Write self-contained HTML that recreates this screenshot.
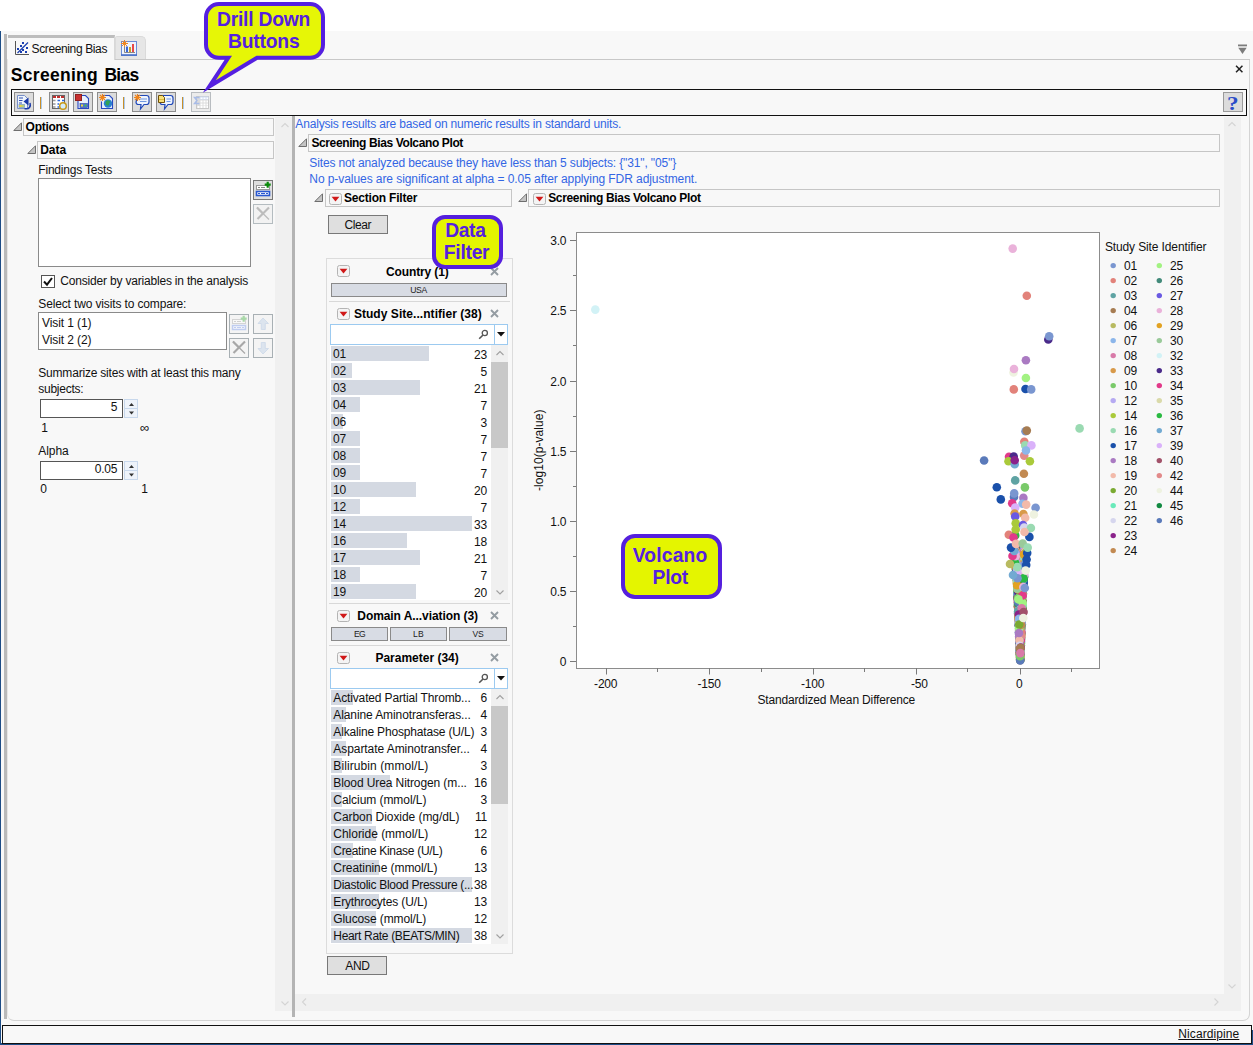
<!DOCTYPE html>
<html><head><meta charset="utf-8"><title>Screening Bias</title>
<style>
*{box-sizing:border-box;margin:0;padding:0}
html,body{width:1253px;height:1045px;overflow:hidden;background:#fff}
body{position:relative;font-family:"Liberation Sans",sans-serif;font-size:12px;color:#111}
.a{position:absolute}
.t{position:absolute;white-space:nowrap;line-height:1}
.hdr{position:absolute;border:1px solid #c6c6c6;background:#f8f8f8}
.btn{position:absolute;background:#dfdfdf;border:1px solid #787878}
.tb{position:absolute;top:92px;width:20px;height:20px;background:#dcdcdc;border:1px solid #8c8c8c}
.sep{position:absolute;top:97px;width:2px;height:12px;background:#c98f2a;border-right:1px solid #a8caf0}
.bar{position:absolute;left:331px;height:15px;background:#d4d9e2}
.call{position:absolute;background:#e4f500;border:4px solid #5520dd;border-radius:14px}
.sq{position:absolute;background:#d8dce4;border:1px solid #8a8a8a}
svg{position:absolute;overflow:visible}
</style></head>
<body>
<div class="a" style="left:0px;top:31px;width:1253px;height:1014px;background:#f8f8f8"></div>
<div class="a" style="left:0px;top:31px;width:1px;height:1014px;background:#1c4c86"></div>
<div class="a" style="left:0px;top:1043px;width:1253px;height:2px;background:#1c4c86"></div>
<div class="a" style="left:1251px;top:1030px;width:2px;height:15px;background:#1c4c86"></div>
<div class="a" style="left:4px;top:34px;width:3px;height:985px;background:#b9b9b9"></div>
<div class="a" style="left:7px;top:59px;width:1243px;height:962px;border:1px solid #d4d4d4;border-top:none;border-left:1px solid #e6e6e6;border-radius:0 0 7px 7px"></div>
<div class="a" style="left:113px;top:59px;width:1137px;height:1px;background:#c8c8c8"></div>
<div class="a" style="left:8px;top:35px;width:107px;height:25px;border-top:3px solid #bdbdbd;border-right:1px solid #d8d8d8;background:#f8f8f8"></div>
<div class="a" style="left:115px;top:36px;width:31px;height:23px;background:#e6e6e6;border-radius:2px 5px 0 0;border:1px solid #dadada;border-bottom:none"></div>
<svg style="left:15px;top:41px" width="15" height="15" viewBox="0 0 15 15">
<path d="M0.5 0v13.5H14" fill="none" stroke="#555" stroke-width="1"/>
<path d="M2.5 12L13 1.5" stroke="#1a3fb0" stroke-width="1.2"/>
<g fill="#1a3fb0"><rect x="7" y="1" width="2" height="2"/><rect x="5" y="4" width="2" height="2"/><rect x="2" y="7" width="2" height="2"/><rect x="7" y="8" width="2" height="2"/><rect x="11" y="6" width="2" height="2"/><rect x="5" y="10" width="2" height="2"/><rect x="10" y="10" width="2" height="2"/></g></svg>
<div class="t" style="left:31.5px;top:42.7px;font-size:12px;letter-spacing:-0.37px;">Screening Bias</div>
<svg style="left:121px;top:40px" width="16" height="16" viewBox="0 0 16 16">
<rect x="0.500" y="1.500" width="15" height="14" fill="#eef3fc" stroke="#6a8cd8"/><path d="M0 15h16" stroke="#4a70c8" stroke-width="1.600"/>
<path d="M3.500 7v5.500H14" fill="none" stroke="#888" stroke-width="1"/>
<rect x="5" y="6.500" width="2" height="5.500" fill="#3a68d8"/><rect x="8" y="7" width="2" height="5" fill="#c8a028"/><rect x="11" y="4" width="2" height="8" fill="#e84848"/>
<path d="M3.500 0v7M0 3.500h7M1 1l5 5M6 1L1 6" stroke="#f08820" stroke-width="1"/></svg>
<svg style="left:1237.500px;top:43.500px" width="9" height="10" viewBox="0 0 9 10"><path d="M0 0.500h9v1.800H0z" fill="#7c7c7c"/><path d="M0.300 3.800h8.400L4.500 10z" fill="#7c7c7c"/></svg>
<div class="t" style="left:10.8px;top:67.0px;font-size:17.5px;font-weight:bold;color:#000;letter-spacing:0.29px;">Screening</div>
<div class="t" style="left:104.4px;top:67.0px;font-size:17.5px;font-weight:bold;color:#000;letter-spacing:-0.69px;">Bias</div>
<svg style="left:1234.600px;top:65.400px" width="8.500" height="8" viewBox="0 0 10 10"><path d="M1 1l8 8M9 1l-8 8" stroke="#222" stroke-width="1.900"/></svg>
<div class="a" style="left:11px;top:89px;width:1236px;height:27px;border:1.5px solid #111;background:#f8f8f8"></div>
<div class="tb" style="left:14px;top:92px;width:20px;height:20px;"></div>
<div class="tb" style="left:49px;top:92px;width:20px;height:20px;"></div>
<div class="tb" style="left:73px;top:92px;width:20px;height:20px;"></div>
<div class="tb" style="left:97px;top:92px;width:20px;height:20px;"></div>
<div class="tb" style="left:132px;top:92px;width:20px;height:20px;"></div>
<div class="tb" style="left:156px;top:92px;width:20px;height:20px;"></div>
<div class="tb" style="left:191px;top:92px;width:20px;height:20px;background:#ececec;border-color:#b8bcc0"></div>
<div class="sep" style="left:40px;top:97px;width:2px;height:12px;"></div>
<div class="sep" style="left:123px;top:97px;width:2px;height:12px;"></div>
<div class="sep" style="left:182px;top:97px;width:2px;height:12px;"></div>
<div class="a" style="left:1223px;top:92px;width:20px;height:20px;background:#dcdcdc;border:1px solid #9a9a9a"></div>
<div class="t" style="left:1227.3px;top:93.5px;font-size:19px;font-weight:bold;color:#2a4cc8;font-family:'Liberation Serif',serif;transform:scaleX(1.22);transform-origin:0 0;">?</div>
<svg style="left:14px;top:92px" width="20" height="20" viewBox="0 0 20 20"><path d="M3.500 3.500h7l3 3v10h-10z" fill="#eef4fc" stroke="#7890c8"/><path d="M5 6h4M5 8.500h3.500M5 11h3" stroke="#3050b0" stroke-width="1.100"/><rect x="5" y="12.500" width="5.500" height="3" fill="#b8d070" stroke="#7a9ac8" stroke-width=".7"/><rect x="5.500" y="13" width="2" height="2" fill="#f0d040"/><path d="M10.500 16.500c5 1 6.500-2 5.500-5.500" fill="none" stroke="#1838a8" stroke-width="1.500"/><path d="M9.500 9.500l5-4v8z" fill="#1838a8"/></svg>
<svg style="left:49px;top:92px" width="20" height="20" viewBox="0 0 20 20"><rect x="3.500" y="3.500" width="12" height="13" fill="#fff" stroke="#666"/><path d="M4 5h3M8 5h3M12 5h3" stroke="#c03030" stroke-width="2.200"/><path d="M4 8.500h2.500M4 12h2.500M4 15h2.500" stroke="#999" stroke-width="1.600"/><path d="M8.500 8.500h2.500M13 8.500h2M8.500 12h1.500M8.500 15h1.500" stroke="#2868e0" stroke-width="1.300"/><circle cx="14" cy="14" r="3.300" fill="#d4ecfa" stroke="#c89818" stroke-width="1.500"/></svg>
<svg style="left:73px;top:92px" width="20" height="20" viewBox="0 0 20 20"><path d="M6.500 3.500h6l3 3v10h-10.500v-8" fill="#e8f0fc" stroke="#2848c0" stroke-width="1.100"/><rect x="2.500" y="2.500" width="6" height="6" fill="#c83030" stroke="#902020"/><rect x="7" y="11.500" width="7.500" height="4" fill="#4a70d8" stroke="#2848a8" stroke-width=".6"/><rect x="8" y="12.500" width="2" height="2" fill="#f0d838"/><rect x="11.500" y="12.500" width="2" height="2" fill="#48c048"/></svg>
<svg style="left:97px;top:92px" width="20" height="20" viewBox="0 0 20 20"><path d="M5.500 3.500h7l3 3v10h-11v-7" fill="#e8f0fc" stroke="#2848c0" stroke-width="1.100"/><circle cx="11" cy="11.500" r="4.200" fill="#2a80d0"/><path d="M8.500 10c1-2.500 3.500-2 4.500-1s-1 2-1 3.500-2.500 1.500-3.500-.5z" fill="#30a058"/><path d="M5.500 2v7M2 5.500h7M3 3l5 5M8 3L3 8" stroke="#f08418" stroke-width="1.100"/></svg>
<svg style="left:132px;top:92px" width="20" height="20" viewBox="0 0 20 20"><path d="M6 3.500h8.500a2.500 2.500 0 0 1 2.500 2.500v4a2.500 2.500 0 0 1-2.500 2.500H12L8.500 17l.5-4.500H6.500a2.500 2.500 0 0 1-2.500-2.500z" fill="#eef4fe" stroke="#2048b8" stroke-width="1.200"/><path d="M8 7h7M8 9.500h6.500" stroke="#7098e0" stroke-width="1.200"/><path d="M5.500 2v7M2 5.500h7M3 3l5 5M8 3L3 8" stroke="#f08418" stroke-width="1.100"/></svg>
<svg style="left:156px;top:92px" width="20" height="20" viewBox="0 0 20 20"><path d="M6 3.500h8.500a2.500 2.500 0 0 1 2.500 2.500v4a2.500 2.500 0 0 1-2.500 2.500H12L8.500 17l.5-4.500H6.500a2.500 2.500 0 0 1-2.500-2.500z" fill="#eef4fe" stroke="#2048b8" stroke-width="1.200"/><path d="M10.500 7h4.500M10.500 9.500h4" stroke="#7098e0" stroke-width="1.200"/><path d="M2.500 3.500h4l2 2v5h-6z" fill="#f8e078" stroke="#705008"/><path d="M3 7.500h5" stroke="#d8b030" stroke-width=".8"/></svg>
<svg style="left:191px;top:92px" width="20" height="20" viewBox="0 0 20 20"><rect x="5.500" y="4.500" width="12" height="12" fill="#dcdcdc" stroke="#c8c8c8"/><path d="M8.500 4.500h9v3h-9z" fill="#d0dcf4"/><g fill="#fff"><rect x="9.500" y="5.500" width="2" height="1.500"/><rect x="12.500" y="5.500" width="2" height="1.500"/><rect x="15.500" y="5.500" width="1.500" height="1.500"/><rect x="9.500" y="8.500" width="2" height="2"/><rect x="12.500" y="8.500" width="2" height="2"/><rect x="15.500" y="8.500" width="1.500" height="2"/><rect x="9.500" y="11.500" width="2" height="2"/><rect x="12.500" y="11.500" width="2" height="2"/><rect x="15.500" y="11.500" width="1.500" height="2"/><rect x="6.500" y="14" width="2" height="2"/><rect x="9.500" y="14" width="2" height="2"/><rect x="12.500" y="14" width="2" height="2"/><rect x="15.500" y="14" width="1.500" height="2"/></g><path d="M8.500 5.500H3.500l2.500 3-2.500 3h5" fill="none" stroke="#a8bce8" stroke-width="1.400"/></svg>
<svg style="left:0;top:0" width="340" height="100" viewBox="0 0 340 100">
<path d="M219 4H310a13 13 0 0 1 13 13V44.800a13 13 0 0 1-13 13H257L209.350 86.470 228.300 57.800H219a13 13 0 0 1-13-13V17a13 13 0 0 1 13-13z" fill="#e6f606" stroke="#5520e0" stroke-width="4" stroke-linejoin="miter" stroke-miterlimit="12"/></svg>
<div class="t" style="left:217.0px;top:10.2px;font-size:19.3px;font-weight:bold;color:#5520e0;letter-spacing:-0.23px;">Drill Down</div>
<div class="t" style="left:228.0px;top:32.3px;font-size:19.3px;font-weight:bold;color:#5520e0;letter-spacing:-0.19px;">Buttons</div>
<div class="a" style="left:275px;top:117px;width:17px;height:894px;background:#f0f0f0"></div>
<div class="a" style="left:292px;top:116px;width:3px;height:901px;background:#b4b4b4"></div>
<svg style="left:280.5px;top:121.5px" width="8" height="8" viewBox="0 0 8 8"><path d="M0.500 5L4 1.500 7.500 5" fill="none" stroke="#d4d4d4" stroke-width="1.1"/></svg>
<svg style="left:280.5px;top:999.5px" width="8" height="8" viewBox="0 0 8 8"><path d="M0.500 1.500L4 5 7.500 1.500" fill="none" stroke="#d4d4d4" stroke-width="1.1"/></svg>
<svg style="left:13px;top:122px" width="9" height="9" viewBox="0 0 9 9"><path d="M8.500 0.800V8.500H0.800z" fill="#c4c4c4" stroke="#6e6e6e" stroke-width="1"/></svg>
<div class="hdr" style="left:23px;top:118px;width:251px;height:18px;"></div>
<div class="t" style="left:25.6px;top:120.9px;font-size:12px;font-weight:bold;color:#000;letter-spacing:-0.28px;">Options</div>
<svg style="left:27px;top:145px" width="9" height="9" viewBox="0 0 9 9"><path d="M8.500 0.800V8.500H0.800z" fill="#c4c4c4" stroke="#6e6e6e" stroke-width="1"/></svg>
<div class="hdr" style="left:37px;top:141px;width:237px;height:18px;"></div>
<div class="t" style="left:40.2px;top:143.9px;font-size:12px;font-weight:bold;color:#000;">Data</div>
<div class="t" style="left:38.3px;top:164.1px;font-size:12px;letter-spacing:-0.20px;">Findings Tests</div>
<div class="a" style="left:38px;top:178px;width:213px;height:89px;background:#fff;border:1px solid #8a8a8a"></div>
<div class="btn" style="left:253px;top:180px;width:20px;height:20px;"></div>
<svg style="left:253px;top:180px" width="20" height="20" viewBox="0 0 20 20"><rect x="3.500" y="5.500" width="13" height="4" fill="#fff" stroke="#9a9a9a"/><path d="M5 7.500h2M8 7.500h4" stroke="#888" stroke-width="1"/><rect x="3.500" y="11.500" width="13" height="4" fill="#fff" stroke="#2a58d0" stroke-width="1.600"/><path d="M5 13.500h2M8 13.500h4M13 13.500h2" stroke="#2a58d0" stroke-width="1"/><path d="M14.700 1.700v6M11.700 4.700h6" stroke="#0a8a0a" stroke-width="2.200"/></svg>
<div class="a" style="left:253px;top:204px;width:20px;height:20px;background:#f2f2f2;border:1px solid #b4bcc0"></div>
<svg style="left:253px;top:204px" width="20" height="20" viewBox="0 0 20 20"><path d="M4 3.500L16 15.500" stroke="#bcbcbc" stroke-width="1.200"/><path d="M4.500 15L16 3.500" stroke="#bcbcbc" stroke-width="2.200"/><path d="M4 3.500l6 6" stroke="#bcbcbc" stroke-width="2.200"/></svg>
<div class="a" style="left:41px;top:275px;width:14px;height:13px;background:#fff;border:1px solid #555"></div>
<svg style="left:43px;top:277px" width="10" height="10" viewBox="0 0 10 10"><path d="M1 4.500l3 3.200L9 1" fill="none" stroke="#111" stroke-width="2"/></svg>
<div class="t" style="left:60.3px;top:275.2px;font-size:12px;letter-spacing:-0.19px;">Consider by variables in the analysis</div>
<div class="t" style="left:38.3px;top:297.9px;font-size:12px;letter-spacing:-0.14px;">Select two visits to compare:</div>
<div class="a" style="left:38px;top:312px;width:189px;height:38px;background:#fff;border:1px solid #8a8a8a"></div>
<div class="t" style="left:42.1px;top:317.1px;font-size:12px;letter-spacing:-0.10px;">Visit 1 (1)</div>
<div class="t" style="left:42.1px;top:334.1px;font-size:12px;letter-spacing:-0.10px;">Visit 2 (2)</div>
<div class="a" style="left:229px;top:314px;width:20px;height:20px;background:#f4f4f4;border:1px solid #a8b0b4"></div>
<div class="a" style="left:253px;top:314px;width:20px;height:20px;background:#f4f4f4;border:1px solid #a8b0b4"></div>
<div class="a" style="left:229px;top:338px;width:20px;height:20px;background:#f4f4f4;border:1px solid #a8b0b4"></div>
<div class="a" style="left:253px;top:338px;width:20px;height:20px;background:#f4f4f4;border:1px solid #a8b0b4"></div>
<svg style="left:229px;top:314px" width="20" height="20" viewBox="0 0 20 20"><rect x="3.500" y="5.500" width="13" height="4" fill="#f8f8f8" stroke="#d4d4d4"/><path d="M5 7.500h2M8 7.500h4" stroke="#d0d0d0" stroke-width="1"/><rect x="3.500" y="11.500" width="13" height="4" fill="#f4f6fc" stroke="#c0cdf0" stroke-width="1.500"/><path d="M5 13.500h2M8 13.500h4M13 13.500h2" stroke="#c0cdf0" stroke-width="1"/><path d="M14.700 1.700v6M11.700 4.700h6" stroke="#a8d8a8" stroke-width="2.200"/></svg>
<svg style="left:253px;top:314px" width="20" height="20" viewBox="0 0 20 20"><path d="M10 4L5 9.500h3.300v6h4v-6h3.200z" fill="#dce4ee" stroke="#ccd8e8" stroke-width=".8"/></svg>
<svg style="left:229px;top:338px" width="20" height="20" viewBox="0 0 20 20"><path d="M4 3.500L16 15.500" stroke="#a8a8a8" stroke-width="1.200"/><path d="M4.500 15L16 3.500" stroke="#a8a8a8" stroke-width="2.200"/><path d="M4 3.500l6 6" stroke="#a8a8a8" stroke-width="2.200"/></svg>
<svg style="left:253px;top:338px" width="20" height="20" viewBox="0 0 20 20"><path d="M10 16L5 10.500h3.300v-6h4v6h3.200z" fill="#dce4ee" stroke="#ccd8e8" stroke-width=".8"/></svg>
<div class="t" style="left:38.3px;top:366.9px;font-size:12px;letter-spacing:-0.20px;">Summarize sites with at least this many</div>
<div class="t" style="left:38.3px;top:382.9px;font-size:12px;letter-spacing:-0.26px;">subjects:</div>
<div class="a" style="left:40px;top:399px;width:83px;height:19px;background:#fff;border:1px solid #555"></div>
<div class="t" style="left:110.8px;top:401.1px;font-size:12px;letter-spacing:-0.20px;">5</div>
<div class="a" style="left:124px;top:399px;width:14px;height:10px;background:#eef3fa;border:1px solid #c8d8ec"></div>
<div class="a" style="left:124px;top:408px;width:14px;height:10px;background:#eef3fa;border:1px solid #c8d8ec"></div>
<svg style="left:128.500px;top:402px" width="5" height="13" viewBox="0 0 5 13"><path d="M0 4h5L2.500 1zM0 9.500h5L2.500 12.500z" fill="#333"/></svg>
<div class="t" style="left:41.2px;top:421.9px;font-size:12px;letter-spacing:-0.20px;">1</div>
<div class="t" style="left:140.0px;top:421.1px;font-size:13px;letter-spacing:-0.20px;">∞</div>
<div class="t" style="left:38.3px;top:445.2px;font-size:12px;letter-spacing:-0.06px;">Alpha</div>
<div class="a" style="left:40px;top:461px;width:83px;height:19px;background:#fff;border:1px solid #555"></div>
<div class="t" style="left:94.7px;top:463.1px;font-size:12px;letter-spacing:-0.20px;">0.05</div>
<div class="a" style="left:124px;top:461px;width:14px;height:10px;background:#eef3fa;border:1px solid #c8d8ec"></div>
<div class="a" style="left:124px;top:470px;width:14px;height:10px;background:#eef3fa;border:1px solid #c8d8ec"></div>
<svg style="left:128.500px;top:464px" width="5" height="13" viewBox="0 0 5 13"><path d="M0 4h5L2.500 1zM0 9.500h5L2.500 12.500z" fill="#333"/></svg>
<div class="t" style="left:40.2px;top:483.4px;font-size:12px;letter-spacing:-0.20px;">0</div>
<div class="t" style="left:141.2px;top:483.4px;font-size:12px;letter-spacing:-0.20px;">1</div>
<div class="a" style="left:1224px;top:117px;width:17px;height:877px;background:#f0f0f0"></div>
<div class="a" style="left:295px;top:994px;width:946px;height:17px;background:#f0f0f0"></div>
<svg style="left:1228px;top:121px" width="8" height="8" viewBox="0 0 8 8"><path d="M0.500 5L4 1.500 7.500 5" fill="none" stroke="#d4d4d4" stroke-width="1.1"/></svg>
<svg style="left:1228px;top:983px" width="8" height="8" viewBox="0 0 8 8"><path d="M0.500 1.500L4 5 7.500 1.500" fill="none" stroke="#d4d4d4" stroke-width="1.1"/></svg>
<svg style="left:301px;top:998px" width="8" height="8" viewBox="0 0 8 8"><path d="M5 0.500L1.500 4 5 7.500" fill="none" stroke="#d4d4d4" stroke-width="1.1"/></svg>
<svg style="left:1213px;top:998px" width="8" height="8" viewBox="0 0 8 8"><path d="M1.500 0.500L5 4 1.500 7.500" fill="none" stroke="#d4d4d4" stroke-width="1.1"/></svg>
<div class="t" style="left:295.3px;top:118.0px;font-size:12px;color:#3366e4;letter-spacing:-0.16px;">Analysis results are based on numeric results in standard units.</div>
<svg style="left:298px;top:138px" width="9" height="9" viewBox="0 0 9 9"><path d="M8.500 0.800V8.500H0.800z" fill="#c4c4c4" stroke="#6e6e6e" stroke-width="1"/></svg>
<div class="hdr" style="left:308px;top:134px;width:912px;height:18px;"></div>
<div class="t" style="left:311.4px;top:137.1px;font-size:12px;font-weight:bold;color:#000;letter-spacing:-0.38px;">Screening Bias Volcano Plot</div>
<div class="t" style="left:309.3px;top:157.0px;font-size:12px;color:#3366e4;letter-spacing:-0.13px;">Sites not analyzed because they have less than 5 subjects: {"31", "05"}</div>
<div class="t" style="left:309.3px;top:172.8px;font-size:12px;color:#3366e4;letter-spacing:-0.07px;">No p-values are significant at alpha = 0.05 after applying FDR adjustment.</div>
<svg style="left:314px;top:193px" width="9" height="9" viewBox="0 0 9 9"><path d="M8.500 0.800V8.500H0.800z" fill="#c4c4c4" stroke="#6e6e6e" stroke-width="1"/></svg>
<div class="hdr" style="left:325px;top:189px;width:187px;height:18px;"></div>
<svg style="left:329px;top:192.5px" width="13" height="12" viewBox="0 0 13 12"><rect x=".5" y=".5" width="12" height="11" rx="2" fill="#f4f4f4" stroke="#b4b4b4"/><path d="M2.600 3.800h7.800L6.500 8.400z" fill="#d01818"/></svg>
<div class="t" style="left:344.0px;top:192.3px;font-size:12px;font-weight:bold;color:#000;letter-spacing:-0.20px;">Section Filter</div>
<svg style="left:518px;top:193px" width="9" height="9" viewBox="0 0 9 9"><path d="M8.500 0.800V8.500H0.800z" fill="#c4c4c4" stroke="#6e6e6e" stroke-width="1"/></svg>
<div class="hdr" style="left:528px;top:189px;width:692px;height:18px;"></div>
<svg style="left:533px;top:192.5px" width="13" height="12" viewBox="0 0 13 12"><rect x=".5" y=".5" width="12" height="11" rx="2" fill="#f4f4f4" stroke="#b4b4b4"/><path d="M2.600 3.800h7.800L6.500 8.400z" fill="#d01818"/></svg>
<div class="t" style="left:548.2px;top:192.3px;font-size:12px;font-weight:bold;color:#000;letter-spacing:-0.35px;">Screening Bias Volcano Plot</div>
<div class="btn" style="left:328px;top:215px;width:60px;height:19px;"></div>
<div class="t" style="left:344.4px;top:218.8px;font-size:12px;letter-spacing:-0.38px;">Clear</div>
<div class="a" style="left:326px;top:258px;width:187px;height:696px;border:1px solid #dcdcdc;background:#f8f8f8"></div>
<svg style="left:337px;top:265px" width="13" height="12" viewBox="0 0 13 12"><rect x=".5" y=".5" width="12" height="11" rx="2" fill="#f4f4f4" stroke="#b4b4b4"/><path d="M2.600 3.800h7.800L6.500 8.400z" fill="#d01818"/></svg>
<div class="t" style="left:386.1px;top:265.9px;font-size:12px;font-weight:bold;color:#000;letter-spacing:-0.14px;">Country (1)</div>
<svg style="left:490px;top:267px" width="9" height="9" viewBox="0 0 9 9"><path d="M1 1l7 7M8 1L1 8" stroke="#949ca2" stroke-width="1.900"/></svg>
<div class="sq" style="left:331px;top:283px;width:176px;height:14px;"></div>
<div class="t" style="left:410.3px;top:285.9px;font-size:8.6px;color:#222;letter-spacing:-0.42px;">USA</div>
<div class="a" style="left:329px;top:301px;width:181px;height:1px;background:#d8d8d8"></div>
<svg style="left:337px;top:307.5px" width="13" height="12" viewBox="0 0 13 12"><rect x=".5" y=".5" width="12" height="11" rx="2" fill="#f4f4f4" stroke="#b4b4b4"/><path d="M2.600 3.800h7.800L6.500 8.400z" fill="#d01818"/></svg>
<div class="t" style="left:353.9px;top:308.0px;font-size:12px;font-weight:bold;color:#000;letter-spacing:0.05px;">Study Site...ntifier (38)</div>
<svg style="left:490px;top:309px" width="9" height="9" viewBox="0 0 9 9"><path d="M1 1l7 7M8 1L1 8" stroke="#949ca2" stroke-width="1.900"/></svg>
<div class="a" style="left:330px;top:324px;width:178px;height:21px;background:#fff;border:1px solid #9ccaf0"></div>
<div class="a" style="left:494px;top:325px;width:1px;height:19px;background:#9ccaf0"></div>
<svg style="left:478px;top:329px" width="11" height="11" viewBox="0 0 11 11"><circle cx="6.800" cy="4" r="2.600" fill="none" stroke="#555" stroke-width="1.300"/><path d="M5 6L1.200 9.800" stroke="#555" stroke-width="1.600"/></svg>
<svg style="left:497px;top:332px" width="8" height="5" viewBox="0 0 8 5"><path d="M0 0h8L4 4.500z" fill="#111"/></svg>
<div class="a" style="left:330px;top:345px;width:161px;height:255px;background:#fff"></div>
<div class="bar" style="left:331px;top:346px;width:98px;height:15px;"></div>
<div class="t" style="left:333.0px;top:348.2px;font-size:12px;letter-spacing:-0.28px;">01</div>
<div class="t" style="left:474.1px;top:348.6px;font-size:12px;letter-spacing:-0.20px;">23</div>
<div class="bar" style="left:331px;top:363px;width:21px;height:15px;"></div>
<div class="t" style="left:333.0px;top:365.2px;font-size:12px;letter-spacing:-0.28px;">02</div>
<div class="t" style="left:480.6px;top:365.6px;font-size:12px;letter-spacing:-0.20px;">5</div>
<div class="bar" style="left:331px;top:380px;width:88.8px;height:15px;"></div>
<div class="t" style="left:333.0px;top:382.2px;font-size:12px;letter-spacing:-0.28px;">03</div>
<div class="t" style="left:474.1px;top:382.6px;font-size:12px;letter-spacing:-0.20px;">21</div>
<div class="bar" style="left:331px;top:397px;width:29px;height:15px;"></div>
<div class="t" style="left:333.0px;top:399.2px;font-size:12px;letter-spacing:-0.28px;">04</div>
<div class="t" style="left:480.6px;top:399.6px;font-size:12px;letter-spacing:-0.20px;">7</div>
<div class="bar" style="left:331px;top:414px;width:11.5px;height:15px;"></div>
<div class="t" style="left:333.0px;top:416.2px;font-size:12px;letter-spacing:-0.28px;">06</div>
<div class="t" style="left:480.6px;top:416.6px;font-size:12px;letter-spacing:-0.20px;">3</div>
<div class="bar" style="left:331px;top:431px;width:29px;height:15px;"></div>
<div class="t" style="left:333.0px;top:433.2px;font-size:12px;letter-spacing:-0.28px;">07</div>
<div class="t" style="left:480.6px;top:433.6px;font-size:12px;letter-spacing:-0.20px;">7</div>
<div class="bar" style="left:331px;top:448px;width:29px;height:15px;"></div>
<div class="t" style="left:333.0px;top:450.2px;font-size:12px;letter-spacing:-0.28px;">08</div>
<div class="t" style="left:480.6px;top:450.6px;font-size:12px;letter-spacing:-0.20px;">7</div>
<div class="bar" style="left:331px;top:465px;width:29px;height:15px;"></div>
<div class="t" style="left:333.0px;top:467.2px;font-size:12px;letter-spacing:-0.28px;">09</div>
<div class="t" style="left:480.6px;top:467.6px;font-size:12px;letter-spacing:-0.20px;">7</div>
<div class="bar" style="left:331px;top:482px;width:84.7px;height:15px;"></div>
<div class="t" style="left:333.0px;top:484.2px;font-size:12px;letter-spacing:-0.28px;">10</div>
<div class="t" style="left:474.1px;top:484.6px;font-size:12px;letter-spacing:-0.20px;">20</div>
<div class="bar" style="left:331px;top:499px;width:29px;height:15px;"></div>
<div class="t" style="left:333.0px;top:501.2px;font-size:12px;letter-spacing:-0.28px;">12</div>
<div class="t" style="left:480.6px;top:501.6px;font-size:12px;letter-spacing:-0.20px;">7</div>
<div class="bar" style="left:331px;top:516px;width:140.7px;height:15px;"></div>
<div class="t" style="left:333.0px;top:518.2px;font-size:12px;letter-spacing:-0.28px;">14</div>
<div class="t" style="left:474.1px;top:518.6px;font-size:12px;letter-spacing:-0.20px;">33</div>
<div class="bar" style="left:331px;top:533px;width:75.5px;height:15px;"></div>
<div class="t" style="left:333.0px;top:535.2px;font-size:12px;letter-spacing:-0.28px;">16</div>
<div class="t" style="left:474.1px;top:535.6px;font-size:12px;letter-spacing:-0.20px;">18</div>
<div class="bar" style="left:331px;top:550px;width:88.8px;height:15px;"></div>
<div class="t" style="left:333.0px;top:552.2px;font-size:12px;letter-spacing:-0.28px;">17</div>
<div class="t" style="left:474.1px;top:552.6px;font-size:12px;letter-spacing:-0.20px;">21</div>
<div class="bar" style="left:331px;top:567px;width:29px;height:15px;"></div>
<div class="t" style="left:333.0px;top:569.2px;font-size:12px;letter-spacing:-0.28px;">18</div>
<div class="t" style="left:480.6px;top:569.6px;font-size:12px;letter-spacing:-0.20px;">7</div>
<div class="bar" style="left:331px;top:584px;width:84.7px;height:15px;"></div>
<div class="t" style="left:333.0px;top:586.2px;font-size:12px;letter-spacing:-0.28px;">19</div>
<div class="t" style="left:474.1px;top:586.6px;font-size:12px;letter-spacing:-0.20px;">20</div>
<div class="a" style="left:491px;top:345px;width:17px;height:255px;background:#f0f0f0"></div>
<div class="a" style="left:491px;top:362px;width:17px;height:86px;background:#c8c8c8"></div>
<svg style="left:496px;top:350px" width="8" height="8" viewBox="0 0 8 8"><path d="M0.500 5L4 1.500 7.500 5" fill="none" stroke="#a0a0a0" stroke-width="1.1"/></svg>
<svg style="left:496px;top:589px" width="8" height="8" viewBox="0 0 8 8"><path d="M0.500 1.500L4 5 7.500 1.500" fill="none" stroke="#a0a0a0" stroke-width="1.1"/></svg>
<div class="a" style="left:329px;top:603px;width:181px;height:1px;background:#d8d8d8"></div>
<svg style="left:337px;top:609.5px" width="13" height="12" viewBox="0 0 13 12"><rect x=".5" y=".5" width="12" height="11" rx="2" fill="#f4f4f4" stroke="#b4b4b4"/><path d="M2.600 3.800h7.800L6.500 8.400z" fill="#d01818"/></svg>
<div class="t" style="left:357.3px;top:610.0px;font-size:12px;font-weight:bold;color:#000;letter-spacing:-0.07px;">Domain A...viation (3)</div>
<svg style="left:490px;top:611px" width="9" height="9" viewBox="0 0 9 9"><path d="M1 1l7 7M8 1L1 8" stroke="#949ca2" stroke-width="1.900"/></svg>
<div class="sq" style="left:331px;top:627px;width:57px;height:14px;"></div>
<div class="t" style="left:354.0px;top:629.9px;font-size:8.6px;color:#222;letter-spacing:-0.71px;">EG</div>
<div class="sq" style="left:390px;top:627px;width:57px;height:14px;"></div>
<div class="t" style="left:413.0px;top:629.9px;font-size:8.6px;color:#222;letter-spacing:0.24px;">LB</div>
<div class="sq" style="left:449px;top:627px;width:58px;height:14px;"></div>
<div class="t" style="left:472.5px;top:629.9px;font-size:8.6px;color:#222;letter-spacing:-0.23px;">VS</div>
<div class="a" style="left:329px;top:645px;width:181px;height:1px;background:#d8d8d8"></div>
<svg style="left:337px;top:651.5px" width="13" height="12" viewBox="0 0 13 12"><rect x=".5" y=".5" width="12" height="11" rx="2" fill="#f4f4f4" stroke="#b4b4b4"/><path d="M2.600 3.800h7.800L6.500 8.400z" fill="#d01818"/></svg>
<div class="t" style="left:375.4px;top:651.8px;font-size:12px;font-weight:bold;color:#000;">Parameter (34)</div>
<svg style="left:490px;top:653px" width="9" height="9" viewBox="0 0 9 9"><path d="M1 1l7 7M8 1L1 8" stroke="#949ca2" stroke-width="1.900"/></svg>
<div class="a" style="left:330px;top:668px;width:178px;height:21px;background:#fff;border:1px solid #9ccaf0"></div>
<div class="a" style="left:494px;top:669px;width:1px;height:19px;background:#9ccaf0"></div>
<svg style="left:478px;top:673px" width="11" height="11" viewBox="0 0 11 11"><circle cx="6.800" cy="4" r="2.600" fill="none" stroke="#555" stroke-width="1.300"/><path d="M5 6L1.200 9.800" stroke="#555" stroke-width="1.600"/></svg>
<svg style="left:497px;top:676px" width="8" height="5" viewBox="0 0 8 5"><path d="M0 0h8L4 4.500z" fill="#111"/></svg>
<div class="a" style="left:330px;top:689px;width:161px;height:255px;background:#fff"></div>
<div class="bar" style="left:331px;top:690px;width:22.2px;height:15px;"></div>
<div class="t" style="left:333.3px;top:691.9px;font-size:12px;letter-spacing:-0.14px;">Activated Partial Thromb...</div>
<div class="t" style="left:480.6px;top:692.1px;font-size:12px;letter-spacing:-0.20px;">6</div>
<div class="bar" style="left:331px;top:707px;width:14.8px;height:15px;"></div>
<div class="t" style="left:333.3px;top:708.9px;font-size:12px;letter-spacing:-0.10px;">Alanine Aminotransferas...</div>
<div class="t" style="left:480.6px;top:709.1px;font-size:12px;letter-spacing:-0.20px;">4</div>
<div class="bar" style="left:331px;top:724px;width:11.1px;height:15px;"></div>
<div class="t" style="left:333.3px;top:725.9px;font-size:12px;letter-spacing:-0.17px;">Alkaline Phosphatase (U/L)</div>
<div class="t" style="left:480.6px;top:726.1px;font-size:12px;letter-spacing:-0.20px;">3</div>
<div class="bar" style="left:331px;top:741px;width:14.8px;height:15px;"></div>
<div class="t" style="left:333.3px;top:742.9px;font-size:12px;letter-spacing:-0.06px;">Aspartate Aminotransfer...</div>
<div class="t" style="left:480.6px;top:743.1px;font-size:12px;letter-spacing:-0.20px;">4</div>
<div class="bar" style="left:331px;top:758px;width:11.1px;height:15px;"></div>
<div class="t" style="left:333.3px;top:759.9px;font-size:12px;letter-spacing:0.09px;">Bilirubin (mmol/L)</div>
<div class="t" style="left:480.6px;top:760.1px;font-size:12px;letter-spacing:-0.20px;">3</div>
<div class="bar" style="left:331px;top:775px;width:59.3px;height:15px;"></div>
<div class="t" style="left:333.3px;top:776.9px;font-size:12px;letter-spacing:-0.10px;">Blood Urea Nitrogen (m...</div>
<div class="t" style="left:474.1px;top:777.1px;font-size:12px;letter-spacing:-0.20px;">16</div>
<div class="bar" style="left:331px;top:792px;width:11.1px;height:15px;"></div>
<div class="t" style="left:333.3px;top:793.9px;font-size:12px;letter-spacing:-0.06px;">Calcium (mmol/L)</div>
<div class="t" style="left:480.6px;top:794.1px;font-size:12px;letter-spacing:-0.20px;">3</div>
<div class="bar" style="left:331px;top:809px;width:40.8px;height:15px;"></div>
<div class="t" style="left:333.3px;top:810.9px;font-size:12px;letter-spacing:-0.06px;">Carbon Dioxide (mg/dL)</div>
<div class="t" style="left:475.0px;top:811.1px;font-size:12px;letter-spacing:-0.20px;">11</div>
<div class="bar" style="left:331px;top:826px;width:44.5px;height:15px;"></div>
<div class="t" style="left:333.3px;top:827.9px;font-size:12px;letter-spacing:-0.02px;">Chloride (mmol/L)</div>
<div class="t" style="left:474.1px;top:828.1px;font-size:12px;letter-spacing:-0.20px;">12</div>
<div class="bar" style="left:331px;top:843px;width:22.2px;height:15px;"></div>
<div class="t" style="left:333.3px;top:844.9px;font-size:12px;letter-spacing:-0.30px;">Creatine Kinase (U/L)</div>
<div class="t" style="left:480.6px;top:845.1px;font-size:12px;letter-spacing:-0.20px;">6</div>
<div class="bar" style="left:331px;top:860px;width:48.2px;height:15px;"></div>
<div class="t" style="left:333.3px;top:861.9px;font-size:12px;letter-spacing:-0.07px;">Creatinine (mmol/L)</div>
<div class="t" style="left:474.1px;top:862.1px;font-size:12px;letter-spacing:-0.20px;">13</div>
<div class="bar" style="left:331px;top:877px;width:140.8px;height:15px;"></div>
<div class="t" style="left:333.3px;top:878.9px;font-size:12px;letter-spacing:-0.28px;">Diastolic Blood Pressure (...</div>
<div class="t" style="left:474.1px;top:879.1px;font-size:12px;letter-spacing:-0.20px;">38</div>
<div class="bar" style="left:331px;top:894px;width:48.2px;height:15px;"></div>
<div class="t" style="left:333.3px;top:895.9px;font-size:12px;letter-spacing:-0.15px;">Erythrocytes (U/L)</div>
<div class="t" style="left:474.1px;top:896.1px;font-size:12px;letter-spacing:-0.20px;">13</div>
<div class="bar" style="left:331px;top:911px;width:44.5px;height:15px;"></div>
<div class="t" style="left:333.3px;top:912.9px;font-size:12px;letter-spacing:-0.11px;">Glucose (mmol/L)</div>
<div class="t" style="left:474.1px;top:913.1px;font-size:12px;letter-spacing:-0.20px;">12</div>
<div class="bar" style="left:331px;top:928px;width:140.8px;height:15px;"></div>
<div class="t" style="left:333.3px;top:929.9px;font-size:12px;letter-spacing:-0.32px;">Heart Rate (BEATS/MIN)</div>
<div class="t" style="left:474.1px;top:930.1px;font-size:12px;letter-spacing:-0.20px;">38</div>
<div class="a" style="left:491px;top:689px;width:17px;height:255px;background:#f0f0f0"></div>
<div class="a" style="left:491px;top:706px;width:17px;height:98px;background:#c8c8c8"></div>
<svg style="left:496px;top:694px" width="8" height="8" viewBox="0 0 8 8"><path d="M0.500 5L4 1.500 7.500 5" fill="none" stroke="#a0a0a0" stroke-width="1.1"/></svg>
<svg style="left:496px;top:933px" width="8" height="8" viewBox="0 0 8 8"><path d="M0.500 1.500L4 5 7.500 1.500" fill="none" stroke="#a0a0a0" stroke-width="1.1"/></svg>
<div class="btn" style="left:327px;top:956px;width:60px;height:19px;"></div>
<div class="t" style="left:345.2px;top:959.9px;font-size:12px;letter-spacing:-0.28px;">AND</div>
<div class="call" style="left:432px;top:215px;width:71px;height:54px;border-radius:13px"></div>
<div class="t" style="left:445.2px;top:221.1px;font-size:19.3px;font-weight:bold;color:#5520e0;letter-spacing:-0.37px;">Data</div>
<div class="t" style="left:443.8px;top:242.9px;font-size:19.3px;font-weight:bold;color:#5520e0;letter-spacing:-0.27px;">Filter</div>
<div class="a" style="left:576px;top:232px;width:524px;height:437px;background:#fff;border:1px solid #8c8c8c"></div>
<svg style="left:0;top:0" width="1253" height="1045" viewBox="0 0 1253 1045"><path d="M570 661.5H576M573 626.5H576M570 591.5H576M573 556.5H576M570 521.5H576M573 486.5H576M570 451.5H576M573 416.5H576M570 381.5H576M573 345.5H576M570 310.5H576M573 275.5H576M570 240.5H576M606.5 668V674.500M657.5 668V672M709.5 668V674.500M761.5 668V672M813.5 668V674.500M864.5 668V672M916.5 668V674.500M967.5 668V672M1020.5 668V674.500M1071.5 668V672" stroke="#7a7a7a" stroke-width="1" fill="none"/></svg>
<div class="t" style="left:559.8px;top:655.9px;font-size:12px;letter-spacing:-0.20px;">0</div>
<div class="t" style="left:550.2px;top:585.9px;font-size:12px;letter-spacing:-0.20px;">0.5</div>
<div class="t" style="left:550.2px;top:515.9px;font-size:12px;letter-spacing:-0.20px;">1.0</div>
<div class="t" style="left:550.2px;top:445.9px;font-size:12px;letter-spacing:-0.20px;">1.5</div>
<div class="t" style="left:550.2px;top:375.9px;font-size:12px;letter-spacing:-0.20px;">2.0</div>
<div class="t" style="left:550.2px;top:304.9px;font-size:12px;letter-spacing:-0.20px;">2.5</div>
<div class="t" style="left:550.2px;top:234.9px;font-size:12px;letter-spacing:-0.20px;">3.0</div>
<div class="t" style="left:594.1px;top:677.7px;font-size:12px;letter-spacing:-0.20px;">-200</div>
<div class="t" style="left:697.5px;top:677.7px;font-size:12px;letter-spacing:-0.20px;">-150</div>
<div class="t" style="left:801.0px;top:677.7px;font-size:12px;letter-spacing:-0.20px;">-100</div>
<div class="t" style="left:910.9px;top:677.7px;font-size:12px;letter-spacing:-0.20px;">-50</div>
<div class="t" style="left:1016.1px;top:677.7px;font-size:12px;letter-spacing:-0.20px;">0</div>
<div class="t" style="left:757.4px;top:693.7px;font-size:12px;letter-spacing:-0.15px;">Standardized Mean Difference</div>
<div class="t" style="left:533px;top:491px;font-size:12px;transform-origin:0 0;transform:rotate(-90deg);letter-spacing:0.05px;color:#111">-log10(p-value)</div>
<div class="t" style="left:1104.9px;top:241.1px;font-size:12px;letter-spacing:-0.12px;">Study Site Identifier</div>
<div class="t" style="left:1124.0px;top:260.4px;font-size:12px;letter-spacing:-0.08px;">01</div>
<div class="t" style="left:1124.0px;top:275.4px;font-size:12px;letter-spacing:-0.08px;">02</div>
<div class="t" style="left:1124.0px;top:290.4px;font-size:12px;letter-spacing:-0.08px;">03</div>
<div class="t" style="left:1124.0px;top:305.4px;font-size:12px;letter-spacing:-0.08px;">04</div>
<div class="t" style="left:1124.0px;top:320.4px;font-size:12px;letter-spacing:-0.08px;">06</div>
<div class="t" style="left:1124.0px;top:335.4px;font-size:12px;letter-spacing:-0.08px;">07</div>
<div class="t" style="left:1124.0px;top:350.4px;font-size:12px;letter-spacing:-0.08px;">08</div>
<div class="t" style="left:1124.0px;top:365.4px;font-size:12px;letter-spacing:-0.08px;">09</div>
<div class="t" style="left:1124.0px;top:380.4px;font-size:12px;letter-spacing:-0.08px;">10</div>
<div class="t" style="left:1124.0px;top:395.4px;font-size:12px;letter-spacing:-0.08px;">12</div>
<div class="t" style="left:1124.0px;top:410.4px;font-size:12px;letter-spacing:-0.08px;">14</div>
<div class="t" style="left:1124.0px;top:425.4px;font-size:12px;letter-spacing:-0.08px;">16</div>
<div class="t" style="left:1124.0px;top:440.4px;font-size:12px;letter-spacing:-0.08px;">17</div>
<div class="t" style="left:1124.0px;top:455.4px;font-size:12px;letter-spacing:-0.08px;">18</div>
<div class="t" style="left:1124.0px;top:470.4px;font-size:12px;letter-spacing:-0.08px;">19</div>
<div class="t" style="left:1124.0px;top:485.4px;font-size:12px;letter-spacing:-0.08px;">20</div>
<div class="t" style="left:1124.0px;top:500.4px;font-size:12px;letter-spacing:-0.08px;">21</div>
<div class="t" style="left:1124.0px;top:515.4px;font-size:12px;letter-spacing:-0.08px;">22</div>
<div class="t" style="left:1124.0px;top:530.4px;font-size:12px;letter-spacing:-0.08px;">23</div>
<div class="t" style="left:1124.0px;top:545.4px;font-size:12px;letter-spacing:-0.08px;">24</div>
<div class="t" style="left:1170.0px;top:260.4px;font-size:12px;letter-spacing:-0.08px;">25</div>
<div class="t" style="left:1170.0px;top:275.4px;font-size:12px;letter-spacing:-0.08px;">26</div>
<div class="t" style="left:1170.0px;top:290.4px;font-size:12px;letter-spacing:-0.08px;">27</div>
<div class="t" style="left:1170.0px;top:305.4px;font-size:12px;letter-spacing:-0.08px;">28</div>
<div class="t" style="left:1170.0px;top:320.4px;font-size:12px;letter-spacing:-0.08px;">29</div>
<div class="t" style="left:1170.0px;top:335.4px;font-size:12px;letter-spacing:-0.08px;">30</div>
<div class="t" style="left:1170.0px;top:350.4px;font-size:12px;letter-spacing:-0.08px;">32</div>
<div class="t" style="left:1170.0px;top:365.4px;font-size:12px;letter-spacing:-0.08px;">33</div>
<div class="t" style="left:1170.0px;top:380.4px;font-size:12px;letter-spacing:-0.08px;">34</div>
<div class="t" style="left:1170.0px;top:395.4px;font-size:12px;letter-spacing:-0.08px;">35</div>
<div class="t" style="left:1170.0px;top:410.4px;font-size:12px;letter-spacing:-0.08px;">36</div>
<div class="t" style="left:1170.0px;top:425.4px;font-size:12px;letter-spacing:-0.08px;">37</div>
<div class="t" style="left:1170.0px;top:440.4px;font-size:12px;letter-spacing:-0.08px;">39</div>
<div class="t" style="left:1170.0px;top:455.4px;font-size:12px;letter-spacing:-0.08px;">40</div>
<div class="t" style="left:1170.0px;top:470.4px;font-size:12px;letter-spacing:-0.08px;">42</div>
<div class="t" style="left:1170.0px;top:485.4px;font-size:12px;letter-spacing:-0.08px;">44</div>
<div class="t" style="left:1170.0px;top:500.4px;font-size:12px;letter-spacing:-0.08px;">45</div>
<div class="t" style="left:1170.0px;top:515.4px;font-size:12px;letter-spacing:-0.08px;">46</div>
<svg style="left:0;top:0" width="1253" height="1045" viewBox="0 0 1253 1045"><circle cx="1113.2" cy="265.6" r="2.700" fill="#7a96d0"/><circle cx="1113.2" cy="280.6" r="2.700" fill="#e2827a"/><circle cx="1113.2" cy="295.6" r="2.700" fill="#5fa3a3"/><circle cx="1113.2" cy="310.6" r="2.700" fill="#a67c52"/><circle cx="1113.2" cy="325.6" r="2.700" fill="#b8ba60"/><circle cx="1113.2" cy="340.6" r="2.700" fill="#8cb6ea"/><circle cx="1113.2" cy="355.6" r="2.700" fill="#d87aa8"/><circle cx="1113.2" cy="370.6" r="2.700" fill="#d89a4a"/><circle cx="1113.2" cy="385.6" r="2.700" fill="#7aca6a"/><circle cx="1113.2" cy="400.6" r="2.700" fill="#b6aaf2"/><circle cx="1113.2" cy="415.6" r="2.700" fill="#aaca3a"/><circle cx="1113.2" cy="430.6" r="2.700" fill="#9adab2"/><circle cx="1113.2" cy="445.6" r="2.700" fill="#1a50aa"/><circle cx="1113.2" cy="460.6" r="2.700" fill="#aa7ac2"/><circle cx="1113.2" cy="475.6" r="2.700" fill="#f2baaa"/><circle cx="1113.2" cy="490.6" r="2.700" fill="#7aaa32"/><circle cx="1113.2" cy="505.6" r="2.700" fill="#6aeaba"/><circle cx="1113.2" cy="520.6" r="2.700" fill="#d6d6ee"/><circle cx="1113.2" cy="535.6" r="2.700" fill="#8a228a"/><circle cx="1113.2" cy="550.6" r="2.700" fill="#c28a52"/><circle cx="1159.3" cy="265.6" r="2.700" fill="#a2f282"/><circle cx="1159.3" cy="280.6" r="2.700" fill="#428a7a"/><circle cx="1159.3" cy="295.6" r="2.700" fill="#6a5ae2"/><circle cx="1159.3" cy="310.6" r="2.700" fill="#eab2da"/><circle cx="1159.3" cy="325.6" r="2.700" fill="#e2a222"/><circle cx="1159.3" cy="340.6" r="2.700" fill="#9aca9a"/><circle cx="1159.3" cy="355.6" r="2.700" fill="#d2f2f6"/><circle cx="1159.3" cy="370.6" r="2.700" fill="#4a2a8a"/><circle cx="1159.3" cy="385.6" r="2.700" fill="#e23a8a"/><circle cx="1159.3" cy="400.6" r="2.700" fill="#dadaaa"/><circle cx="1159.3" cy="415.6" r="2.700" fill="#2aba42"/><circle cx="1159.3" cy="430.6" r="2.700" fill="#72aad2"/><circle cx="1159.3" cy="445.6" r="2.700" fill="#dab2fa"/><circle cx="1159.3" cy="460.6" r="2.700" fill="#a2526a"/><circle cx="1159.3" cy="475.6" r="2.700" fill="#e28a8a"/><circle cx="1159.3" cy="490.6" r="2.700" fill="#eef2e0"/><circle cx="1159.3" cy="505.6" r="2.700" fill="#128a42"/><circle cx="1159.3" cy="520.6" r="2.700" fill="#5a7aba"/></svg>
<svg style="left:0;top:0" width="1253" height="1045" viewBox="0 0 1253 1045"><circle cx="1019.6" cy="640.6" r="4.300" fill="#dab2fa"/><circle cx="1021.3" cy="633.0" r="4.300" fill="#428a7a"/><circle cx="1016.1" cy="572.9" r="4.300" fill="#6aeaba"/><circle cx="1022.1" cy="592.2" r="4.300" fill="#428a7a"/><circle cx="1016.5" cy="573.2" r="4.300" fill="#6a5ae2"/><circle cx="1022.7" cy="595.9" r="4.300" fill="#eab2da"/><circle cx="1022.2" cy="605.1" r="4.300" fill="#6aeaba"/><circle cx="1020.0" cy="655.1" r="4.300" fill="#aaca3a"/><circle cx="1017.2" cy="575.0" r="4.300" fill="#aa7ac2"/><circle cx="1015.3" cy="557.4" r="4.300" fill="#7aca6a"/><circle cx="1017.8" cy="584.3" r="4.300" fill="#a2526a"/><circle cx="1021.9" cy="606.9" r="4.300" fill="#7aca6a"/><circle cx="1017.8" cy="585.7" r="4.300" fill="#b8ba60"/><circle cx="1018.7" cy="613.2" r="4.300" fill="#dab2fa"/><circle cx="1024.0" cy="577.1" r="4.300" fill="#4a2a8a"/><circle cx="1019.8" cy="650.3" r="4.300" fill="#1a50aa"/><circle cx="1020.9" cy="636.1" r="4.300" fill="#72aad2"/><circle cx="1018.6" cy="621.3" r="4.300" fill="#9aca9a"/><circle cx="1019.0" cy="632.3" r="4.300" fill="#5a7aba"/><circle cx="1015.2" cy="551.5" r="4.300" fill="#a2526a"/><circle cx="1023.8" cy="561.4" r="4.300" fill="#dadaaa"/><circle cx="1021.3" cy="632.0" r="4.300" fill="#a2526a"/><circle cx="1022.9" cy="576.1" r="4.300" fill="#aa7ac2"/><circle cx="1022.0" cy="608.0" r="4.300" fill="#428a7a"/><circle cx="1021.3" cy="624.0" r="4.300" fill="#9adab2"/><circle cx="1018.7" cy="617.3" r="4.300" fill="#1a50aa"/><circle cx="1018.8" cy="624.9" r="4.300" fill="#8a228a"/><circle cx="1016.1" cy="555.0" r="4.300" fill="#7aca6a"/><circle cx="1019.4" cy="630.5" r="4.300" fill="#9adab2"/><circle cx="1018.3" cy="596.9" r="4.300" fill="#d87aa8"/><circle cx="1022.8" cy="593.6" r="4.300" fill="#4a2a8a"/><circle cx="1017.0" cy="570.3" r="4.300" fill="#4a2a8a"/><circle cx="1025.0" cy="552.1" r="4.300" fill="#6aeaba"/><circle cx="1022.4" cy="596.9" r="4.300" fill="#e28a8a"/><circle cx="1023.9" cy="561.5" r="4.300" fill="#aa7ac2"/><circle cx="1018.2" cy="608.9" r="4.300" fill="#9adab2"/><circle cx="1025.9" cy="550.4" r="4.300" fill="#dab2fa"/><circle cx="1021.6" cy="611.4" r="4.300" fill="#a2526a"/><circle cx="1019.7" cy="646.5" r="4.300" fill="#e23a8a"/><circle cx="1020.7" cy="645.7" r="4.300" fill="#6aeaba"/><circle cx="1019.4" cy="629.6" r="4.300" fill="#f2baaa"/><circle cx="1017.9" cy="602.0" r="4.300" fill="#e28a8a"/><circle cx="1016.9" cy="561.6" r="4.300" fill="#b8ba60"/><circle cx="1023.3" cy="564.8" r="4.300" fill="#eab2da"/><circle cx="1015.7" cy="550.2" r="4.300" fill="#a2f282"/><circle cx="1022.9" cy="578.9" r="4.300" fill="#c28a52"/><circle cx="1022.2" cy="589.9" r="4.300" fill="#7a96d0"/><circle cx="1015.8" cy="563.8" r="4.300" fill="#e28a8a"/><circle cx="1018.7" cy="608.6" r="4.300" fill="#dab2fa"/><circle cx="1017.6" cy="571.3" r="4.300" fill="#e2a222"/><circle cx="1022.8" cy="593.5" r="4.300" fill="#dab2fa"/><circle cx="1022.2" cy="609.1" r="4.300" fill="#aaca3a"/><circle cx="1021.8" cy="617.8" r="4.300" fill="#d87aa8"/><circle cx="1023.3" cy="584.2" r="4.300" fill="#aa7ac2"/><circle cx="1021.4" cy="630.8" r="4.300" fill="#8cb6ea"/><circle cx="1015.5" cy="549.0" r="4.300" fill="#9adab2"/><circle cx="1018.3" cy="617.2" r="4.300" fill="#8cb6ea"/><circle cx="1019.9" cy="653.3" r="4.300" fill="#a2f282"/><circle cx="1017.7" cy="597.2" r="4.300" fill="#d87aa8"/><circle cx="1018.9" cy="622.7" r="4.300" fill="#2aba42"/><circle cx="1015.6" cy="547.9" r="4.300" fill="#72aad2"/><circle cx="1020.0" cy="653.2" r="4.300" fill="#6aeaba"/><circle cx="1019.9" cy="649.8" r="4.300" fill="#2aba42"/><circle cx="1014.8" cy="556.9" r="4.300" fill="#d87aa8"/><circle cx="1024.9" cy="557.9" r="4.300" fill="#128a42"/><circle cx="1014.9" cy="550.3" r="4.300" fill="#8a228a"/><circle cx="1017.2" cy="579.1" r="4.300" fill="#c28a52"/><circle cx="1019.6" cy="638.7" r="4.300" fill="#9adab2"/><circle cx="1019.7" cy="641.1" r="4.300" fill="#e28a8a"/><circle cx="1022.9" cy="577.0" r="4.300" fill="#8a228a"/><circle cx="1026.8" cy="549.0" r="4.300" fill="#7aaa32"/><circle cx="1020.6" cy="650.1" r="4.300" fill="#a2f282"/><circle cx="1023.6" cy="579.0" r="4.300" fill="#4a2a8a"/><circle cx="1018.2" cy="607.4" r="4.300" fill="#5fa3a3"/><circle cx="1024.1" cy="564.0" r="4.300" fill="#a67c52"/><circle cx="1019.0" cy="624.2" r="4.300" fill="#1a50aa"/><circle cx="1017.3" cy="567.2" r="4.300" fill="#8cb6ea"/><circle cx="1019.0" cy="618.3" r="4.300" fill="#a2526a"/><circle cx="1026.0" cy="551.7" r="4.300" fill="#9aca9a"/><circle cx="1018.6" cy="610.5" r="4.300" fill="#b6aaf2"/><circle cx="1022.2" cy="587.9" r="4.300" fill="#9adab2"/><circle cx="1018.9" cy="609.3" r="4.300" fill="#72aad2"/><circle cx="1015.1" cy="547.6" r="4.300" fill="#428a7a"/><circle cx="1021.7" cy="619.7" r="4.300" fill="#9adab2"/><circle cx="1017.9" cy="581.8" r="4.300" fill="#e23a8a"/><circle cx="1019.6" cy="637.2" r="4.300" fill="#eef2e0"/><circle cx="1021.4" cy="628.0" r="4.300" fill="#f2baaa"/><circle cx="1019.8" cy="646.4" r="4.300" fill="#b8ba60"/><circle cx="1022.5" cy="588.8" r="4.300" fill="#e28a8a"/><circle cx="1016.2" cy="551.6" r="4.300" fill="#a2f282"/><circle cx="1022.7" cy="595.5" r="4.300" fill="#9aca9a"/><circle cx="1024.0" cy="572.2" r="4.300" fill="#aa7ac2"/><circle cx="1020.2" cy="660.1" r="4.300" fill="#e2827a"/><circle cx="1017.5" cy="590.5" r="4.300" fill="#c28a52"/><circle cx="1023.2" cy="568.2" r="4.300" fill="#428a7a"/><circle cx="1025.3" cy="548.6" r="4.300" fill="#d87aa8"/><circle cx="1018.6" cy="619.7" r="4.300" fill="#e28a8a"/><circle cx="1024.4" cy="568.0" r="4.300" fill="#6aeaba"/><circle cx="1022.2" cy="609.4" r="4.300" fill="#aaca3a"/><circle cx="1016.3" cy="571.0" r="4.300" fill="#e23a8a"/><circle cx="1018.8" cy="615.3" r="4.300" fill="#128a42"/><circle cx="1021.6" cy="619.6" r="4.300" fill="#4a2a8a"/><circle cx="1014.9" cy="553.8" r="4.300" fill="#7aaa32"/><circle cx="1021.7" cy="608.8" r="4.300" fill="#8a228a"/><circle cx="1017.9" cy="597.0" r="4.300" fill="#1a50aa"/><circle cx="1018.0" cy="597.2" r="4.300" fill="#e28a8a"/><circle cx="1021.6" cy="614.9" r="4.300" fill="#e23a8a"/><circle cx="1018.0" cy="604.9" r="4.300" fill="#2aba42"/><circle cx="1019.5" cy="635.5" r="4.300" fill="#aaca3a"/><circle cx="1016.3" cy="558.8" r="4.300" fill="#aaca3a"/><circle cx="1018.1" cy="596.5" r="4.300" fill="#5a7aba"/><circle cx="1017.4" cy="592.8" r="4.300" fill="#eab2da"/><circle cx="1022.7" cy="580.4" r="4.300" fill="#b8ba60"/><circle cx="1021.3" cy="635.2" r="4.300" fill="#d89a4a"/><circle cx="1024.5" cy="563.6" r="4.300" fill="#a2f282"/><circle cx="1014.6" cy="555.7" r="4.300" fill="#7aca6a"/><circle cx="1016.4" cy="578.7" r="4.300" fill="#9adab2"/><circle cx="1018.5" cy="614.0" r="4.300" fill="#dab2fa"/><circle cx="1023.2" cy="583.6" r="4.300" fill="#128a42"/><circle cx="1019.7" cy="643.6" r="4.300" fill="#1a50aa"/><circle cx="1015.7" cy="551.6" r="4.300" fill="#e2a222"/><circle cx="1023.6" cy="569.7" r="4.300" fill="#d87aa8"/><circle cx="1021.5" cy="616.8" r="4.300" fill="#8cb6ea"/><circle cx="1017.4" cy="575.7" r="4.300" fill="#428a7a"/><circle cx="1024.4" cy="548.6" r="4.300" fill="#aa7ac2"/><circle cx="1017.7" cy="593.8" r="4.300" fill="#9adab2"/><circle cx="1021.4" cy="619.8" r="4.300" fill="#f2baaa"/><circle cx="1019.7" cy="647.6" r="4.300" fill="#5fa3a3"/><circle cx="1018.9" cy="626.0" r="4.300" fill="#2aba42"/><circle cx="1018.3" cy="598.6" r="4.300" fill="#d87aa8"/><circle cx="1026.2" cy="554.4" r="4.300" fill="#6a5ae2"/><circle cx="1024.5" cy="564.8" r="4.300" fill="#8a228a"/><circle cx="1021.7" cy="604.9" r="4.300" fill="#9aca9a"/><circle cx="1025.4" cy="555.3" r="4.300" fill="#9adab2"/><circle cx="1018.7" cy="615.5" r="4.300" fill="#a67c52"/><circle cx="1018.3" cy="587.2" r="4.300" fill="#a2f282"/><circle cx="1017.1" cy="583.8" r="4.300" fill="#7aca6a"/><circle cx="1017.3" cy="585.2" r="4.300" fill="#72aad2"/><circle cx="1018.5" cy="613.6" r="4.300" fill="#e28a8a"/><circle cx="1016.3" cy="558.8" r="4.300" fill="#e2827a"/><circle cx="1023.4" cy="572.9" r="4.300" fill="#d89a4a"/><circle cx="1020.9" cy="638.6" r="4.300" fill="#5a7aba"/><circle cx="1025.6" cy="558.7" r="4.300" fill="#5fa3a3"/><circle cx="1021.5" cy="627.6" r="4.300" fill="#6aeaba"/><circle cx="1023.3" cy="587.2" r="4.300" fill="#1a50aa"/><circle cx="1026.2" cy="548.1" r="4.300" fill="#7a96d0"/><circle cx="1016.0" cy="558.6" r="4.300" fill="#aa7ac2"/><circle cx="1018.0" cy="602.4" r="4.300" fill="#a2526a"/><circle cx="1017.9" cy="588.9" r="4.300" fill="#a2f282"/><circle cx="1022.2" cy="612.5" r="4.300" fill="#72aad2"/><circle cx="1017.2" cy="574.5" r="4.300" fill="#128a42"/><circle cx="1018.9" cy="614.8" r="4.300" fill="#e23a8a"/><circle cx="1022.7" cy="595.3" r="4.300" fill="#d87aa8"/><circle cx="1019.3" cy="633.2" r="4.300" fill="#e28a8a"/><circle cx="1018.5" cy="604.4" r="4.300" fill="#c28a52"/><circle cx="1018.9" cy="622.3" r="4.300" fill="#b6aaf2"/><circle cx="1017.2" cy="586.4" r="4.300" fill="#e2827a"/><circle cx="1017.4" cy="582.9" r="4.300" fill="#7a96d0"/><circle cx="1019.2" cy="624.9" r="4.300" fill="#4a2a8a"/><circle cx="1020.6" cy="650.4" r="4.300" fill="#6a5ae2"/><circle cx="1022.6" cy="593.9" r="4.300" fill="#b6aaf2"/><circle cx="1021.5" cy="624.4" r="4.300" fill="#e2a222"/><circle cx="1017.8" cy="585.7" r="4.300" fill="#128a42"/><circle cx="1022.7" cy="576.3" r="4.300" fill="#aa7ac2"/><circle cx="1017.9" cy="590.9" r="4.300" fill="#128a42"/><circle cx="1015.7" cy="565.1" r="4.300" fill="#8a228a"/><circle cx="1020.2" cy="659.8" r="4.300" fill="#7aaa32"/><circle cx="1019.4" cy="636.5" r="4.300" fill="#d6d6ee"/><circle cx="1019.8" cy="648.4" r="4.300" fill="#d89a4a"/><circle cx="1017.4" cy="585.0" r="4.300" fill="#6a5ae2"/><circle cx="1021.6" cy="620.7" r="4.300" fill="#128a42"/><circle cx="1022.9" cy="594.1" r="4.300" fill="#428a7a"/><circle cx="1023.3" cy="581.8" r="4.300" fill="#c28a52"/><circle cx="1021.4" cy="625.8" r="4.300" fill="#d87aa8"/><circle cx="1020.0" cy="653.5" r="4.300" fill="#128a42"/><circle cx="1022.5" cy="601.5" r="4.300" fill="#e28a8a"/><circle cx="1019.7" cy="642.2" r="4.300" fill="#5fa3a3"/><circle cx="1018.5" cy="606.0" r="4.300" fill="#5fa3a3"/><circle cx="1016.9" cy="567.8" r="4.300" fill="#b6aaf2"/><circle cx="1016.9" cy="580.7" r="4.300" fill="#a67c52"/><circle cx="1022.6" cy="589.9" r="4.300" fill="#e2827a"/><circle cx="1021.4" cy="617.8" r="4.300" fill="#e28a8a"/><circle cx="1025.4" cy="547.8" r="4.300" fill="#5fa3a3"/><circle cx="1020.0" cy="654.2" r="4.300" fill="#1a50aa"/><circle cx="1018.0" cy="582.2" r="4.300" fill="#dab2fa"/><circle cx="1022.1" cy="611.4" r="4.300" fill="#4a2a8a"/><circle cx="1014.4" cy="550.6" r="4.300" fill="#1a50aa"/><circle cx="1016.1" cy="548.0" r="4.300" fill="#4a2a8a"/><circle cx="1023.8" cy="559.7" r="4.300" fill="#128a42"/><circle cx="1025.5" cy="554.7" r="4.300" fill="#7a96d0"/><circle cx="1015.1" cy="552.2" r="4.300" fill="#1a50aa"/><circle cx="1026.5" cy="551.8" r="4.300" fill="#4a2a8a"/><circle cx="1019.9" cy="652.6" r="4.300" fill="#a2526a"/><circle cx="1021.6" cy="625.5" r="4.300" fill="#f2baaa"/><circle cx="1020.5" cy="649.7" r="4.300" fill="#7aca6a"/><circle cx="1017.2" cy="570.4" r="4.300" fill="#72aad2"/><circle cx="1015.9" cy="569.2" r="4.300" fill="#7aaa32"/><circle cx="1015.9" cy="563.5" r="4.300" fill="#1a50aa"/><circle cx="1020.1" cy="657.6" r="4.300" fill="#a67c52"/><circle cx="1025.2" cy="549.8" r="4.300" fill="#a2526a"/><circle cx="1016.2" cy="549.2" r="4.300" fill="#1a50aa"/><circle cx="1015.0" cy="555.9" r="4.300" fill="#e2827a"/><circle cx="1020.2" cy="660.0" r="4.300" fill="#7aaa32"/><circle cx="1021.3" cy="622.8" r="4.300" fill="#a2526a"/><circle cx="1022.4" cy="608.8" r="4.300" fill="#128a42"/><circle cx="1023.9" cy="576.7" r="4.300" fill="#9aca9a"/><circle cx="1014.7" cy="549.7" r="4.300" fill="#8cb6ea"/><circle cx="1023.1" cy="577.5" r="4.300" fill="#6aeaba"/><circle cx="1022.7" cy="595.1" r="4.300" fill="#5fa3a3"/><circle cx="1020.1" cy="659.0" r="4.300" fill="#e23a8a"/><circle cx="1024.9" cy="555.1" r="4.300" fill="#5a7aba"/><circle cx="1015.6" cy="559.8" r="4.300" fill="#e28a8a"/><circle cx="1015.4" cy="563.6" r="4.300" fill="#9adab2"/><circle cx="1017.7" cy="599.2" r="4.300" fill="#aa7ac2"/><circle cx="1017.2" cy="580.0" r="4.300" fill="#5a7aba"/><circle cx="1020.1" cy="657.8" r="4.300" fill="#c28a52"/><circle cx="1016.3" cy="563.1" r="4.300" fill="#6aeaba"/><circle cx="1016.4" cy="567.9" r="4.300" fill="#428a7a"/><circle cx="1024.3" cy="562.2" r="4.300" fill="#8cb6ea"/><circle cx="1020.6" cy="645.6" r="4.300" fill="#5fa3a3"/><circle cx="1018.7" cy="606.6" r="4.300" fill="#428a7a"/><circle cx="1025.3" cy="554.6" r="4.300" fill="#8cb6ea"/><circle cx="1021.5" cy="614.0" r="4.300" fill="#b8ba60"/><circle cx="1016.4" cy="566.2" r="4.300" fill="#72aad2"/><circle cx="1025.4" cy="554.0" r="4.300" fill="#128a42"/><circle cx="1021.1" cy="640.1" r="4.300" fill="#f2baaa"/><circle cx="1019.7" cy="647.2" r="4.300" fill="#9adab2"/><circle cx="1017.4" cy="569.5" r="4.300" fill="#7aca6a"/><circle cx="1016.2" cy="550.3" r="4.300" fill="#a67c52"/><circle cx="1020.0" cy="653.1" r="4.300" fill="#4a2a8a"/><circle cx="1017.6" cy="578.2" r="4.300" fill="#8a228a"/><circle cx="1014.5" cy="550.1" r="4.300" fill="#e2a222"/><circle cx="1018.5" cy="606.9" r="4.300" fill="#6aeaba"/><circle cx="1020.7" cy="646.8" r="4.300" fill="#4a2a8a"/><circle cx="1017.1" cy="571.6" r="4.300" fill="#d89a4a"/><circle cx="1019.9" cy="653.5" r="4.300" fill="#dadaaa"/><circle cx="1019.9" cy="652.8" r="4.300" fill="#a67c52"/><circle cx="1015.0" cy="558.9" r="4.300" fill="#aa7ac2"/><circle cx="1019.2" cy="630.5" r="4.300" fill="#dab2fa"/><circle cx="1019.5" cy="637.0" r="4.300" fill="#c28a52"/><circle cx="1020.8" cy="641.3" r="4.300" fill="#1a50aa"/><circle cx="1024.1" cy="576.1" r="4.300" fill="#72aad2"/><circle cx="1024.8" cy="560.7" r="4.300" fill="#6aeaba"/><circle cx="1018.3" cy="604.6" r="4.300" fill="#1a50aa"/><circle cx="1017.7" cy="592.6" r="4.300" fill="#2aba42"/><circle cx="1021.6" cy="625.3" r="4.300" fill="#2aba42"/><circle cx="1022.8" cy="572.4" r="4.300" fill="#128a42"/><circle cx="1017.1" cy="570.3" r="4.300" fill="#aaca3a"/><circle cx="1015.8" cy="562.8" r="4.300" fill="#d89a4a"/><circle cx="1020.8" cy="642.2" r="4.300" fill="#1a50aa"/><circle cx="1021.1" cy="634.2" r="4.300" fill="#c28a52"/><circle cx="1022.3" cy="600.6" r="4.300" fill="#e2a222"/><circle cx="1016.5" cy="566.3" r="4.300" fill="#9aca9a"/><circle cx="1019.6" cy="636.8" r="4.300" fill="#5fa3a3"/><circle cx="1020.7" cy="644.6" r="4.300" fill="#d87aa8"/><circle cx="1024.3" cy="568.4" r="4.300" fill="#b8ba60"/><circle cx="1017.6" cy="595.9" r="4.300" fill="#d89a4a"/><circle cx="1019.9" cy="650.1" r="4.300" fill="#8cb6ea"/><circle cx="1022.0" cy="605.8" r="4.300" fill="#eab2da"/><circle cx="1018.0" cy="583.8" r="4.300" fill="#e2a222"/><circle cx="1015.7" cy="567.1" r="4.300" fill="#72aad2"/><circle cx="1020.0" cy="655.1" r="4.300" fill="#a2526a"/><circle cx="1018.1" cy="611.9" r="4.300" fill="#72aad2"/><circle cx="1022.9" cy="576.0" r="4.300" fill="#b8ba60"/><circle cx="1016.6" cy="554.4" r="4.300" fill="#e23a8a"/><circle cx="1015.4" cy="550.7" r="4.300" fill="#f2baaa"/><circle cx="1020.2" cy="659.4" r="4.300" fill="#428a7a"/><circle cx="1018.9" cy="624.0" r="4.300" fill="#e23a8a"/><circle cx="1015.6" cy="562.5" r="4.300" fill="#e23a8a"/><circle cx="1016.2" cy="554.5" r="4.300" fill="#5fa3a3"/><circle cx="1019.3" cy="627.9" r="4.300" fill="#d89a4a"/><circle cx="1022.5" cy="583.5" r="4.300" fill="#b8ba60"/><circle cx="1016.7" cy="574.8" r="4.300" fill="#f2baaa"/><circle cx="1019.8" cy="646.2" r="4.300" fill="#5fa3a3"/><circle cx="1014.8" cy="553.3" r="4.300" fill="#e23a8a"/><circle cx="1018.3" cy="614.9" r="4.300" fill="#7aaa32"/><circle cx="1025.0" cy="565.1" r="4.300" fill="#7aaa32"/><circle cx="1024.6" cy="550.9" r="4.300" fill="#5a7aba"/><circle cx="1019.2" cy="625.9" r="4.300" fill="#dadaaa"/><circle cx="1016.9" cy="568.3" r="4.300" fill="#a67c52"/><circle cx="1020.0" cy="651.7" r="4.300" fill="#8a228a"/><circle cx="1024.6" cy="552.1" r="4.300" fill="#1a50aa"/><circle cx="1020.5" cy="651.9" r="4.300" fill="#a2526a"/><circle cx="1019.0" cy="620.3" r="4.300" fill="#b6aaf2"/><circle cx="1018.1" cy="613.6" r="4.300" fill="#5a7aba"/><circle cx="1021.8" cy="613.6" r="4.300" fill="#a2526a"/><circle cx="1022.4" cy="584.0" r="4.300" fill="#1a50aa"/><circle cx="1021.9" cy="614.5" r="4.300" fill="#428a7a"/><circle cx="1021.4" cy="616.0" r="4.300" fill="#7aaa32"/><circle cx="1018.1" cy="606.3" r="4.300" fill="#8cb6ea"/><circle cx="1018.6" cy="611.5" r="4.300" fill="#4a2a8a"/><circle cx="1018.5" cy="621.8" r="4.300" fill="#dab2fa"/><circle cx="1021.3" cy="630.7" r="4.300" fill="#eab2da"/><circle cx="1020.1" cy="655.0" r="4.300" fill="#f2baaa"/><circle cx="1017.2" cy="577.3" r="4.300" fill="#9aca9a"/><circle cx="1018.1" cy="597.1" r="4.300" fill="#428a7a"/><circle cx="1014.5" cy="550.3" r="4.300" fill="#8cb6ea"/><circle cx="1024.3" cy="569.2" r="4.300" fill="#aa7ac2"/><circle cx="1016.2" cy="574.2" r="4.300" fill="#6a5ae2"/><circle cx="1017.5" cy="595.0" r="4.300" fill="#428a7a"/><circle cx="1022.9" cy="578.1" r="4.300" fill="#9aca9a"/><circle cx="1019.3" cy="633.3" r="4.300" fill="#2aba42"/><circle cx="1020.6" cy="644.1" r="4.300" fill="#7aca6a"/><circle cx="1016.7" cy="560.8" r="4.300" fill="#d89a4a"/><circle cx="1016.2" cy="574.1" r="4.300" fill="#72aad2"/><circle cx="1022.2" cy="606.6" r="4.300" fill="#c28a52"/><circle cx="1020.0" cy="653.2" r="4.300" fill="#b8ba60"/><circle cx="1015.3" cy="553.9" r="4.300" fill="#128a42"/><circle cx="1020.4" cy="654.7" r="4.300" fill="#1a50aa"/><circle cx="1022.4" cy="601.2" r="4.300" fill="#4a2a8a"/><circle cx="1016.8" cy="562.2" r="4.300" fill="#428a7a"/><circle cx="1017.5" cy="594.2" r="4.300" fill="#72aad2"/><circle cx="1015.5" cy="556.6" r="4.300" fill="#aaca3a"/><circle cx="1021.7" cy="612.4" r="4.300" fill="#d89a4a"/><circle cx="1025.4" cy="558.8" r="4.300" fill="#e2827a"/><circle cx="1014.6" cy="554.2" r="4.300" fill="#aaca3a"/><circle cx="1019.1" cy="624.4" r="4.300" fill="#2aba42"/><circle cx="1018.7" cy="613.7" r="4.300" fill="#f2baaa"/><circle cx="1021.9" cy="598.7" r="4.300" fill="#7aca6a"/><circle cx="1020.9" cy="643.6" r="4.300" fill="#7aaa32"/><circle cx="1016.9" cy="575.7" r="4.300" fill="#aa7ac2"/><circle cx="1020.4" cy="656.0" r="4.300" fill="#aaca3a"/><circle cx="1019.4" cy="639.0" r="4.300" fill="#e2a222"/><circle cx="1019.4" cy="632.7" r="4.300" fill="#a67c52"/><circle cx="1020.7" cy="643.3" r="4.300" fill="#e28a8a"/><circle cx="1020.6" cy="647.2" r="4.300" fill="#e2827a"/><circle cx="1017.7" cy="598.3" r="4.300" fill="#72aad2"/><circle cx="1018.4" cy="606.5" r="4.300" fill="#a67c52"/><circle cx="1017.2" cy="570.3" r="4.300" fill="#b8ba60"/><circle cx="1019.2" cy="636.9" r="4.300" fill="#e28a8a"/><circle cx="1022.1" cy="590.7" r="4.300" fill="#9adab2"/><circle cx="1021.3" cy="632.6" r="4.300" fill="#e23a8a"/><circle cx="1020.7" cy="649.1" r="4.300" fill="#8cb6ea"/><circle cx="1025.8" cy="550.2" r="4.300" fill="#2aba42"/><circle cx="1017.4" cy="586.1" r="4.300" fill="#6a5ae2"/><circle cx="1020.7" cy="648.3" r="4.300" fill="#e28a8a"/><circle cx="1017.9" cy="606.8" r="4.300" fill="#c28a52"/><circle cx="1021.6" cy="620.6" r="4.300" fill="#e23a8a"/><circle cx="1022.7" cy="579.1" r="4.300" fill="#128a42"/><circle cx="1022.7" cy="594.5" r="4.300" fill="#aa7ac2"/><circle cx="1019.4" cy="631.3" r="4.300" fill="#d6d6ee"/><circle cx="1018.4" cy="602.2" r="4.300" fill="#7a96d0"/><circle cx="1022.5" cy="605.1" r="4.300" fill="#6aeaba"/><circle cx="1019.2" cy="634.3" r="4.300" fill="#72aad2"/><circle cx="1016.7" cy="575.7" r="4.300" fill="#aaca3a"/><circle cx="1024.3" cy="554.1" r="4.300" fill="#7aaa32"/><circle cx="1026.2" cy="551.0" r="4.300" fill="#9adab2"/><circle cx="1021.1" cy="637.8" r="4.300" fill="#c28a52"/><circle cx="1017.5" cy="584.8" r="4.300" fill="#7aaa32"/><circle cx="1019.6" cy="644.6" r="4.300" fill="#a67c52"/><circle cx="1021.7" cy="618.5" r="4.300" fill="#5fa3a3"/><circle cx="1018.7" cy="616.4" r="4.300" fill="#eab2da"/><circle cx="1018.0" cy="606.2" r="4.300" fill="#a67c52"/><circle cx="1021.6" cy="627.4" r="4.300" fill="#d87aa8"/><circle cx="1023.0" cy="586.1" r="4.300" fill="#aaca3a"/><circle cx="1020.7" cy="647.8" r="4.300" fill="#aaca3a"/><circle cx="1021.7" cy="614.5" r="4.300" fill="#aaca3a"/><circle cx="1018.3" cy="602.2" r="4.300" fill="#128a42"/><circle cx="1017.9" cy="597.5" r="4.300" fill="#128a42"/><circle cx="1021.9" cy="610.3" r="4.300" fill="#8cb6ea"/><circle cx="1023.8" cy="576.9" r="4.300" fill="#8a228a"/><circle cx="1024.1" cy="561.0" r="4.300" fill="#128a42"/><circle cx="1019.0" cy="630.1" r="4.300" fill="#eab2da"/><circle cx="1020.7" cy="645.9" r="4.300" fill="#6aeaba"/><circle cx="1023.7" cy="566.3" r="4.300" fill="#aaca3a"/><circle cx="1021.3" cy="624.5" r="4.300" fill="#e28a8a"/><circle cx="1019.1" cy="626.1" r="4.300" fill="#a67c52"/><circle cx="1019.8" cy="646.5" r="4.300" fill="#a2526a"/><circle cx="1022.5" cy="594.2" r="4.300" fill="#d89a4a"/><circle cx="1016.8" cy="565.9" r="4.300" fill="#eef2e0"/><circle cx="1018.0" cy="594.5" r="4.300" fill="#7a96d0"/><circle cx="1018.8" cy="616.0" r="4.300" fill="#aa7ac2"/><circle cx="1017.6" cy="598.0" r="4.300" fill="#a2526a"/><circle cx="1014.1" cy="548.9" r="4.300" fill="#dadaaa"/><circle cx="1022.4" cy="583.3" r="4.300" fill="#e2a222"/><circle cx="1018.1" cy="586.4" r="4.300" fill="#a2f282"/><circle cx="1016.7" cy="557.7" r="4.300" fill="#7aca6a"/><circle cx="1025.2" cy="558.0" r="4.300" fill="#d6d6ee"/><circle cx="1017.2" cy="571.4" r="4.300" fill="#d87aa8"/><circle cx="1021.4" cy="622.3" r="4.300" fill="#b6aaf2"/><circle cx="1020.9" cy="637.4" r="4.300" fill="#8a228a"/><circle cx="1019.3" cy="628.3" r="4.300" fill="#7a96d0"/><circle cx="1017.8" cy="581.5" r="4.300" fill="#4a2a8a"/><circle cx="1020.7" cy="646.7" r="4.300" fill="#8a228a"/><circle cx="1026.0" cy="555.8" r="4.300" fill="#9adab2"/><circle cx="1017.5" cy="588.8" r="4.300" fill="#e2a222"/><circle cx="1019.8" cy="649.8" r="4.300" fill="#dab2fa"/><circle cx="1020.6" cy="651.5" r="4.300" fill="#9aca9a"/><circle cx="1023.4" cy="569.2" r="4.300" fill="#e28a8a"/><circle cx="1020.9" cy="637.1" r="4.300" fill="#e28a8a"/><circle cx="1017.3" cy="567.6" r="4.300" fill="#b8ba60"/><circle cx="1023.2" cy="566.4" r="4.300" fill="#9adab2"/><circle cx="1017.2" cy="583.9" r="4.300" fill="#e23a8a"/><circle cx="1022.7" cy="586.4" r="4.300" fill="#8cb6ea"/><circle cx="1023.7" cy="574.2" r="4.300" fill="#c28a52"/><circle cx="1019.2" cy="628.5" r="4.300" fill="#2aba42"/><circle cx="1021.1" cy="639.0" r="4.300" fill="#6aeaba"/><circle cx="1020.9" cy="633.9" r="4.300" fill="#a2f282"/><circle cx="1018.0" cy="599.7" r="4.300" fill="#c28a52"/><circle cx="1025.5" cy="550.8" r="4.300" fill="#d87aa8"/><circle cx="1023.7" cy="558.7" r="4.300" fill="#dab2fa"/><circle cx="1022.9" cy="578.2" r="4.300" fill="#428a7a"/><circle cx="1018.6" cy="601.9" r="4.300" fill="#e28a8a"/><circle cx="1018.4" cy="592.6" r="4.300" fill="#4a2a8a"/><circle cx="1024.2" cy="568.6" r="4.300" fill="#9aca9a"/><circle cx="1021.7" cy="617.2" r="4.300" fill="#a2526a"/><circle cx="1018.1" cy="589.5" r="4.300" fill="#e2a222"/><circle cx="1016.2" cy="574.5" r="4.300" fill="#a67c52"/><circle cx="1024.6" cy="549.0" r="4.300" fill="#b6aaf2"/><circle cx="1019.2" cy="636.5" r="4.300" fill="#aa7ac2"/><circle cx="1017.8" cy="587.7" r="4.300" fill="#428a7a"/><circle cx="1025.1" cy="560.2" r="4.300" fill="#7aaa32"/><circle cx="1020.2" cy="660.4" r="4.300" fill="#5a7aba"/><circle cx="1016.6" cy="556.2" r="4.300" fill="#6a5ae2"/><circle cx="1018.6" cy="599.0" r="4.300" fill="#7a96d0"/><circle cx="1018.8" cy="624.0" r="4.300" fill="#1a50aa"/><circle cx="1021.0" cy="632.7" r="4.300" fill="#7aca6a"/><circle cx="1020.8" cy="645.2" r="4.300" fill="#2aba42"/><circle cx="1018.1" cy="604.0" r="4.300" fill="#428a7a"/><circle cx="1023.5" cy="568.1" r="4.300" fill="#aaca3a"/><circle cx="1023.7" cy="582.6" r="4.300" fill="#1a50aa"/><circle cx="1017.1" cy="571.4" r="4.300" fill="#aaca3a"/><circle cx="1025.8" cy="548.4" r="4.300" fill="#2aba42"/><circle cx="1016.9" cy="582.8" r="4.300" fill="#e2a222"/><circle cx="1023.1" cy="572.4" r="4.300" fill="#b6aaf2"/><circle cx="1024.0" cy="555.8" r="4.300" fill="#e23a8a"/><circle cx="1023.2" cy="570.6" r="4.300" fill="#a2f282"/><circle cx="1019.9" cy="650.6" r="4.300" fill="#5fa3a3"/><circle cx="1018.0" cy="600.4" r="4.300" fill="#aa7ac2"/><circle cx="1020.7" cy="645.6" r="4.300" fill="#b8ba60"/><circle cx="1018.7" cy="621.1" r="4.300" fill="#8cb6ea"/><circle cx="1023.3" cy="577.4" r="4.300" fill="#6a5ae2"/><circle cx="1021.9" cy="599.6" r="4.300" fill="#6aeaba"/><circle cx="1022.0" cy="600.9" r="4.300" fill="#7aaa32"/><circle cx="1017.0" cy="568.2" r="4.300" fill="#d89a4a"/><circle cx="1023.3" cy="576.2" r="4.300" fill="#4a2a8a"/><circle cx="1018.1" cy="598.1" r="4.300" fill="#7aca6a"/><circle cx="1023.2" cy="571.8" r="4.300" fill="#1a50aa"/><circle cx="1015.8" cy="557.6" r="4.300" fill="#e2827a"/><circle cx="1018.6" cy="610.4" r="4.300" fill="#8cb6ea"/><circle cx="1023.6" cy="576.4" r="4.300" fill="#f2baaa"/><circle cx="1022.9" cy="574.7" r="4.300" fill="#d89a4a"/><circle cx="1022.1" cy="612.4" r="4.300" fill="#5fa3a3"/><circle cx="1023.9" cy="553.7" r="4.300" fill="#8a228a"/><circle cx="1024.9" cy="549.9" r="4.300" fill="#b6aaf2"/><circle cx="1018.3" cy="601.7" r="4.300" fill="#5a7aba"/><circle cx="1015.7" cy="567.3" r="4.300" fill="#d89a4a"/><circle cx="1016.1" cy="561.2" r="4.300" fill="#e28a8a"/><circle cx="1017.4" cy="584.5" r="4.300" fill="#6aeaba"/><circle cx="1019.1" cy="624.3" r="4.300" fill="#8cb6ea"/><circle cx="1021.3" cy="621.1" r="4.300" fill="#7aaa32"/><circle cx="1021.6" cy="624.0" r="4.300" fill="#1a50aa"/><circle cx="1018.8" cy="623.5" r="4.300" fill="#eef2e0"/><circle cx="1017.4" cy="586.4" r="4.300" fill="#5fa3a3"/><circle cx="1020.6" cy="647.2" r="4.300" fill="#aa7ac2"/><circle cx="1021.2" cy="627.7" r="4.300" fill="#7aca6a"/><circle cx="1016.3" cy="571.6" r="4.300" fill="#1a50aa"/><circle cx="1017.5" cy="573.7" r="4.300" fill="#7a96d0"/><circle cx="1023.5" cy="579.3" r="4.300" fill="#128a42"/><circle cx="1022.9" cy="579.9" r="4.300" fill="#5fa3a3"/><circle cx="1018.2" cy="611.3" r="4.300" fill="#5fa3a3"/><circle cx="1018.0" cy="583.9" r="4.300" fill="#c28a52"/><circle cx="1024.4" cy="562.4" r="4.300" fill="#e2a222"/><circle cx="1017.1" cy="580.7" r="4.300" fill="#9adab2"/><circle cx="1019.7" cy="643.3" r="4.300" fill="#7aaa32"/><circle cx="1014.7" cy="550.7" r="4.300" fill="#a67c52"/><circle cx="1019.3" cy="629.5" r="4.300" fill="#5fa3a3"/><circle cx="1024.3" cy="552.2" r="4.300" fill="#e2827a"/><circle cx="1022.4" cy="611.4" r="4.300" fill="#c28a52"/><circle cx="1025.2" cy="551.8" r="4.300" fill="#f2baaa"/><circle cx="1020.9" cy="640.1" r="4.300" fill="#e23a8a"/><circle cx="1022.7" cy="602.8" r="4.300" fill="#a2f282"/><circle cx="1021.7" cy="608.2" r="4.300" fill="#d87aa8"/><circle cx="1022.6" cy="595.5" r="4.300" fill="#e23a8a"/><circle cx="1021.8" cy="624.2" r="4.300" fill="#5fa3a3"/><circle cx="1021.3" cy="622.9" r="4.300" fill="#b6aaf2"/><circle cx="1019.4" cy="642.0" r="4.300" fill="#6a5ae2"/><circle cx="1017.3" cy="588.7" r="4.300" fill="#9aca9a"/><circle cx="1017.1" cy="570.0" r="4.300" fill="#b6aaf2"/><circle cx="1025.5" cy="557.4" r="4.300" fill="#a2526a"/><circle cx="1018.0" cy="584.8" r="4.300" fill="#128a42"/><circle cx="1021.0" cy="631.9" r="4.300" fill="#e2827a"/><circle cx="1021.9" cy="616.3" r="4.300" fill="#8a228a"/><circle cx="1018.7" cy="615.0" r="4.300" fill="#aaca3a"/><circle cx="1024.2" cy="574.5" r="4.300" fill="#eab2da"/><circle cx="1021.0" cy="636.2" r="4.300" fill="#e28a8a"/><circle cx="1025.7" cy="552.8" r="4.300" fill="#7aca6a"/><circle cx="1017.6" cy="571.4" r="4.300" fill="#dab2fa"/><circle cx="1019.1" cy="628.8" r="4.300" fill="#a2f282"/><circle cx="1023.9" cy="565.1" r="4.300" fill="#7a96d0"/><circle cx="1015.8" cy="553.7" r="4.300" fill="#b6aaf2"/><circle cx="1017.1" cy="585.1" r="4.300" fill="#e2a222"/><circle cx="1018.9" cy="617.5" r="4.300" fill="#9aca9a"/><circle cx="1016.2" cy="562.8" r="4.300" fill="#b6aaf2"/><circle cx="1023.5" cy="578.3" r="4.300" fill="#2aba42"/><circle cx="1018.7" cy="617.2" r="4.300" fill="#d87aa8"/><circle cx="1018.3" cy="617.9" r="4.300" fill="#c28a52"/><circle cx="1019.5" cy="640.5" r="4.300" fill="#5fa3a3"/><circle cx="1019.5" cy="640.6" r="4.300" fill="#f2baaa"/><circle cx="1019.7" cy="645.8" r="4.300" fill="#d6d6ee"/><circle cx="1023.9" cy="557.0" r="4.300" fill="#9adab2"/><circle cx="1018.8" cy="614.6" r="4.300" fill="#8a228a"/><circle cx="1018.6" cy="619.5" r="4.300" fill="#d89a4a"/><circle cx="1019.0" cy="618.9" r="4.300" fill="#8cb6ea"/><circle cx="1015.2" cy="562.9" r="4.300" fill="#2aba42"/><circle cx="1020.7" cy="647.6" r="4.300" fill="#8a228a"/><circle cx="1017.2" cy="567.1" r="4.300" fill="#9adab2"/><circle cx="1023.3" cy="587.0" r="4.300" fill="#eab2da"/><circle cx="1021.2" cy="624.8" r="4.300" fill="#c28a52"/><circle cx="1013.6" cy="548.0" r="4.300" fill="#aa7ac2"/><circle cx="1020.0" cy="656.3" r="4.300" fill="#7aca6a"/><circle cx="1015.6" cy="556.2" r="4.300" fill="#eab2da"/><circle cx="1018.5" cy="599.4" r="4.300" fill="#a2f282"/><circle cx="1020.6" cy="647.9" r="4.300" fill="#a67c52"/><circle cx="1017.5" cy="578.2" r="4.300" fill="#7a96d0"/><circle cx="1019.8" cy="648.9" r="4.300" fill="#a67c52"/><circle cx="1019.2" cy="624.5" r="4.300" fill="#7aaa32"/><circle cx="1020.4" cy="653.1" r="4.300" fill="#d87aa8"/><circle cx="1019.0" cy="633.0" r="4.300" fill="#aa7ac2"/><circle cx="1024.0" cy="554.6" r="4.300" fill="#e2a222"/><circle cx="1027.2" cy="553.0" r="4.300" fill="#1a50aa"/><circle cx="1026.6" cy="559.5" r="4.300" fill="#1a50aa"/><circle cx="1026.2" cy="565.0" r="4.300" fill="#1a50aa"/><circle cx="1025.6" cy="570.5" r="4.300" fill="#eef2e0"/><circle cx="1012.5" cy="556.0" r="4.300" fill="#e23a8a"/><circle cx="1014.2" cy="551.0" r="4.300" fill="#72aad2"/><circle cx="1010.0" cy="564.0" r="4.300" fill="#b8ba60"/><circle cx="1013.0" cy="575.0" r="4.300" fill="#72aad2"/><circle cx="1024.8" cy="588.0" r="4.300" fill="#7a96d0"/><circle cx="1023.6" cy="612.0" r="4.300" fill="#a2526a"/><circle cx="1023.3" cy="618.0" r="4.300" fill="#eef2e0"/><circle cx="595.3" cy="309.6" r="4.300" fill="#d2f2f6"/><circle cx="1012.7" cy="248.6" r="4.300" fill="#eab2da"/><circle cx="1026.8" cy="295.8" r="4.300" fill="#e2827a"/><circle cx="1048.3" cy="339.5" r="4.300" fill="#4a2a8a"/><circle cx="1049.2" cy="336.3" r="4.300" fill="#7a96d0"/><circle cx="1025.9" cy="360.3" r="4.300" fill="#aa7ac2"/><circle cx="1013.5" cy="372.5" r="4.300" fill="#eef2e0"/><circle cx="1014.0" cy="369.0" r="4.300" fill="#eab2da"/><circle cx="1025.9" cy="378.0" r="4.300" fill="#a2f282"/><circle cx="1013.8" cy="389.4" r="4.300" fill="#e2827a"/><circle cx="1025.5" cy="389.0" r="4.300" fill="#1a50aa"/><circle cx="1031.2" cy="389.4" r="4.300" fill="#7a96d0"/><circle cx="1079.6" cy="428.4" r="4.300" fill="#9adab2"/><circle cx="1025.5" cy="431.2" r="4.300" fill="#7a96d0"/><circle cx="1026.8" cy="430.6" r="4.300" fill="#a67c52"/><circle cx="1024.3" cy="441.8" r="4.300" fill="#e2827a"/><circle cx="1025.2" cy="445.4" r="4.300" fill="#9adab2"/><circle cx="1031.4" cy="445.4" r="4.300" fill="#dab2fa"/><circle cx="1024.2" cy="455.6" r="4.300" fill="#e28a8a"/><circle cx="1026.0" cy="450.5" r="4.300" fill="#8cb6ea"/><circle cx="1009.0" cy="456.8" r="4.300" fill="#e23a8a"/><circle cx="1013.7" cy="456.6" r="4.300" fill="#4a2a8a"/><circle cx="1008.5" cy="461.3" r="4.300" fill="#aaca3a"/><circle cx="1014.7" cy="464.3" r="4.300" fill="#72aad2"/><circle cx="1014.7" cy="460.3" r="4.300" fill="#8a228a"/><circle cx="1029.9" cy="461.3" r="4.300" fill="#aaca3a"/><circle cx="984.1" cy="460.5" r="4.300" fill="#5a7aba"/><circle cx="1023.9" cy="473.7" r="4.300" fill="#c28a52"/><circle cx="1015.2" cy="480.4" r="4.300" fill="#5fa3a3"/><circle cx="996.8" cy="487.2" r="4.300" fill="#1a50aa"/><circle cx="1024.9" cy="487.4" r="4.300" fill="#7aca6a"/><circle cx="1014.0" cy="497.0" r="4.300" fill="#5a7aba"/><circle cx="1014.2" cy="493.4" r="4.300" fill="#7a96d0"/><circle cx="1000.8" cy="499.4" r="4.300" fill="#1a50aa"/><circle cx="1023.4" cy="497.9" r="4.300" fill="#aa7ac2"/><circle cx="1012.2" cy="503.3" r="4.300" fill="#e23a8a"/><circle cx="1022.5" cy="503.8" r="4.300" fill="#8cb6ea"/><circle cx="1026.2" cy="504.6" r="4.300" fill="#f2baaa"/><circle cx="1015.2" cy="507.6" r="4.300" fill="#dab2fa"/><circle cx="1035.6" cy="507.8" r="4.300" fill="#7a96d0"/><circle cx="1033.9" cy="514.5" r="4.300" fill="#eef2e0"/><circle cx="1014.6" cy="513.5" r="4.300" fill="#d89a4a"/><circle cx="1023.4" cy="514.0" r="4.300" fill="#d89a4a"/><circle cx="1015.2" cy="516.5" r="4.300" fill="#6a5ae2"/><circle cx="1025.2" cy="517.8" r="4.300" fill="#f2baaa"/><circle cx="1015.2" cy="535.4" r="4.300" fill="#2aba42"/><circle cx="1015.7" cy="523.2" r="4.300" fill="#aaca3a"/><circle cx="1023.0" cy="525.0" r="4.300" fill="#6a5ae2"/><circle cx="1024.2" cy="527.5" r="4.300" fill="#d6d6ee"/><circle cx="1030.9" cy="528.0" r="4.300" fill="#9adab2"/><circle cx="1015.7" cy="529.5" r="4.300" fill="#aaca3a"/><circle cx="1008.8" cy="534.7" r="4.300" fill="#e2827a"/><circle cx="1013.5" cy="537.5" r="4.300" fill="#e23a8a"/><circle cx="1029.4" cy="536.9" r="4.300" fill="#1a50aa"/><circle cx="1024.5" cy="532.0" r="4.300" fill="#f2baaa"/><circle cx="1011.0" cy="547.6" r="4.300" fill="#1a50aa"/><circle cx="1016.0" cy="543.9" r="4.300" fill="#f2baaa"/><circle cx="1022.7" cy="543.6" r="4.300" fill="#9aca9a"/><circle cx="1027.7" cy="547.6" r="4.300" fill="#9adab2"/></svg>
<div class="call" style="left:621px;top:534px;width:101px;height:65px;border-radius:14px"></div>
<div class="t" style="left:632.7px;top:546.1px;font-size:19.3px;font-weight:bold;color:#5520e0;letter-spacing:0.17px;">Volcano</div>
<div class="t" style="left:652.5px;top:568.1px;font-size:19.3px;font-weight:bold;color:#5520e0;letter-spacing:-0.23px;">Plot</div>
<div class="a" style="left:2px;top:1025px;width:1250px;height:19px;border:1px solid #111;background:#f8f8f8"></div>
<div class="t" style="left:1178.3px;top:1027.6px;font-size:12px;letter-spacing:0.09px;text-decoration:underline;">Nicardipine</div>
</body></html>
